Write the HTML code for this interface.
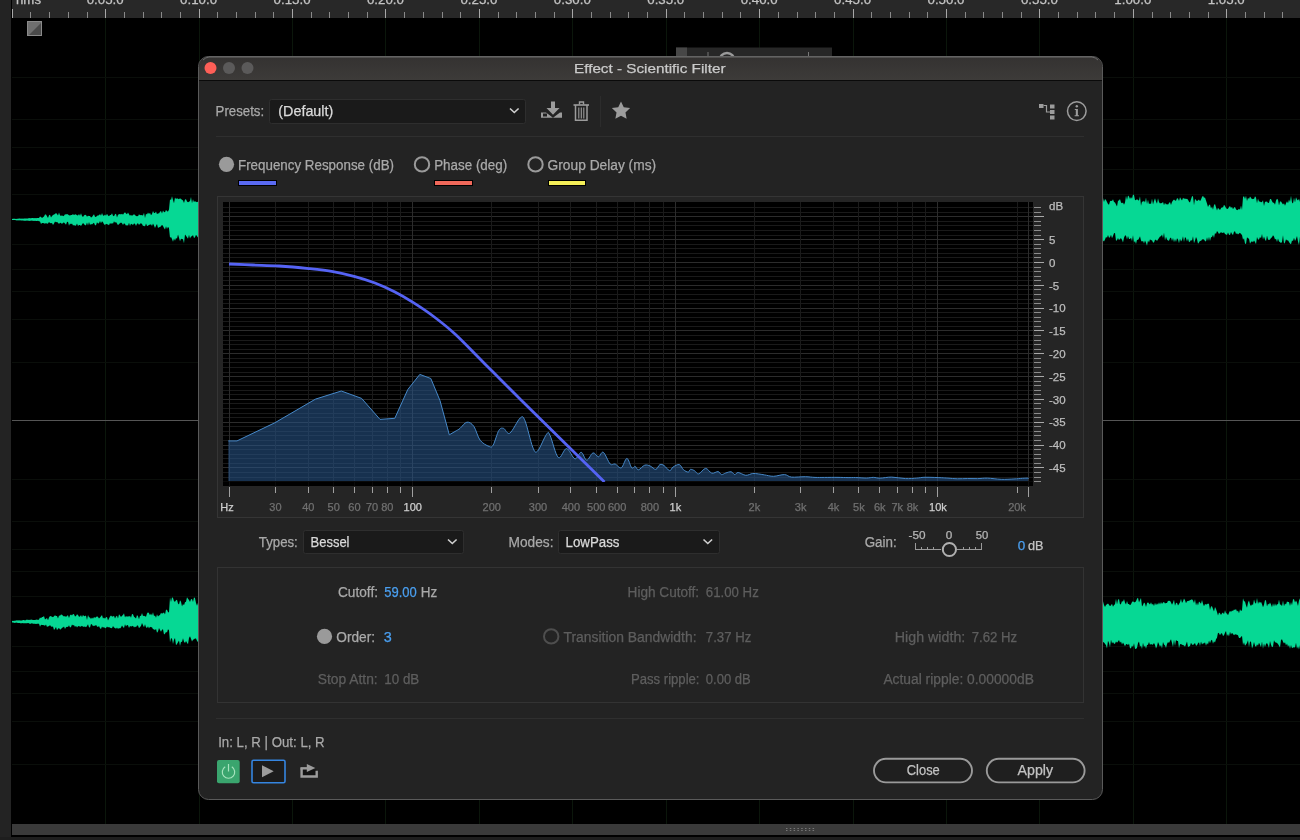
<!DOCTYPE html>
<html><head><meta charset="utf-8"><title>Effect - Scientific Filter</title>
<style>html,body{margin:0;padding:0;background:#000;overflow:hidden}svg{display:block;font-family:"Liberation Sans",sans-serif;will-change:transform}</style>
</head><body>
<svg width="1300" height="840" viewBox="0 0 1300 840">
<rect x="0" y="0" width="1300" height="840" fill="#000" />
<rect x="0" y="0" width="11" height="840" fill="#232323" />
<rect x="12" y="0" width="1288" height="18" fill="#282828" />
<line x1="12.5" y1="9" x2="12.5" y2="18" stroke="#a8a8a8" stroke-width="1" />
<line x1="30.5" y1="12" x2="30.5" y2="18" stroke="#8a8a8a" stroke-width="1" />
<line x1="49.5" y1="12" x2="49.5" y2="18" stroke="#8a8a8a" stroke-width="1" />
<line x1="68.5" y1="12" x2="68.5" y2="18" stroke="#8a8a8a" stroke-width="1" />
<line x1="87.5" y1="12" x2="87.5" y2="18" stroke="#8a8a8a" stroke-width="1" />
<line x1="105.5" y1="9" x2="105.5" y2="18" stroke="#a8a8a8" stroke-width="1" />
<line x1="124.5" y1="12" x2="124.5" y2="18" stroke="#8a8a8a" stroke-width="1" />
<line x1="143.5" y1="12" x2="143.5" y2="18" stroke="#8a8a8a" stroke-width="1" />
<line x1="161.5" y1="12" x2="161.5" y2="18" stroke="#8a8a8a" stroke-width="1" />
<line x1="180.5" y1="12" x2="180.5" y2="18" stroke="#8a8a8a" stroke-width="1" />
<line x1="199.5" y1="9" x2="199.5" y2="18" stroke="#a8a8a8" stroke-width="1" />
<line x1="217.5" y1="12" x2="217.5" y2="18" stroke="#8a8a8a" stroke-width="1" />
<line x1="236.5" y1="12" x2="236.5" y2="18" stroke="#8a8a8a" stroke-width="1" />
<line x1="255.5" y1="12" x2="255.5" y2="18" stroke="#8a8a8a" stroke-width="1" />
<line x1="273.5" y1="12" x2="273.5" y2="18" stroke="#8a8a8a" stroke-width="1" />
<line x1="292.5" y1="9" x2="292.5" y2="18" stroke="#a8a8a8" stroke-width="1" />
<line x1="311.5" y1="12" x2="311.5" y2="18" stroke="#8a8a8a" stroke-width="1" />
<line x1="329.5" y1="12" x2="329.5" y2="18" stroke="#8a8a8a" stroke-width="1" />
<line x1="348.5" y1="12" x2="348.5" y2="18" stroke="#8a8a8a" stroke-width="1" />
<line x1="367.5" y1="12" x2="367.5" y2="18" stroke="#8a8a8a" stroke-width="1" />
<line x1="385.5" y1="9" x2="385.5" y2="18" stroke="#a8a8a8" stroke-width="1" />
<line x1="404.5" y1="12" x2="404.5" y2="18" stroke="#8a8a8a" stroke-width="1" />
<line x1="423.5" y1="12" x2="423.5" y2="18" stroke="#8a8a8a" stroke-width="1" />
<line x1="442.5" y1="12" x2="442.5" y2="18" stroke="#8a8a8a" stroke-width="1" />
<line x1="460.5" y1="12" x2="460.5" y2="18" stroke="#8a8a8a" stroke-width="1" />
<line x1="479.5" y1="9" x2="479.5" y2="18" stroke="#a8a8a8" stroke-width="1" />
<line x1="498.5" y1="12" x2="498.5" y2="18" stroke="#8a8a8a" stroke-width="1" />
<line x1="516.5" y1="12" x2="516.5" y2="18" stroke="#8a8a8a" stroke-width="1" />
<line x1="535.5" y1="12" x2="535.5" y2="18" stroke="#8a8a8a" stroke-width="1" />
<line x1="554.5" y1="12" x2="554.5" y2="18" stroke="#8a8a8a" stroke-width="1" />
<line x1="572.5" y1="9" x2="572.5" y2="18" stroke="#a8a8a8" stroke-width="1" />
<line x1="591.5" y1="12" x2="591.5" y2="18" stroke="#8a8a8a" stroke-width="1" />
<line x1="610.5" y1="12" x2="610.5" y2="18" stroke="#8a8a8a" stroke-width="1" />
<line x1="628.5" y1="12" x2="628.5" y2="18" stroke="#8a8a8a" stroke-width="1" />
<line x1="647.5" y1="12" x2="647.5" y2="18" stroke="#8a8a8a" stroke-width="1" />
<line x1="666.5" y1="9" x2="666.5" y2="18" stroke="#a8a8a8" stroke-width="1" />
<line x1="684.5" y1="12" x2="684.5" y2="18" stroke="#8a8a8a" stroke-width="1" />
<line x1="703.5" y1="12" x2="703.5" y2="18" stroke="#8a8a8a" stroke-width="1" />
<line x1="722.5" y1="12" x2="722.5" y2="18" stroke="#8a8a8a" stroke-width="1" />
<line x1="740.5" y1="12" x2="740.5" y2="18" stroke="#8a8a8a" stroke-width="1" />
<line x1="759.5" y1="9" x2="759.5" y2="18" stroke="#a8a8a8" stroke-width="1" />
<line x1="778.5" y1="12" x2="778.5" y2="18" stroke="#8a8a8a" stroke-width="1" />
<line x1="797.5" y1="12" x2="797.5" y2="18" stroke="#8a8a8a" stroke-width="1" />
<line x1="815.5" y1="12" x2="815.5" y2="18" stroke="#8a8a8a" stroke-width="1" />
<line x1="834.5" y1="12" x2="834.5" y2="18" stroke="#8a8a8a" stroke-width="1" />
<line x1="853.5" y1="9" x2="853.5" y2="18" stroke="#a8a8a8" stroke-width="1" />
<line x1="871.5" y1="12" x2="871.5" y2="18" stroke="#8a8a8a" stroke-width="1" />
<line x1="890.5" y1="12" x2="890.5" y2="18" stroke="#8a8a8a" stroke-width="1" />
<line x1="909.5" y1="12" x2="909.5" y2="18" stroke="#8a8a8a" stroke-width="1" />
<line x1="927.5" y1="12" x2="927.5" y2="18" stroke="#8a8a8a" stroke-width="1" />
<line x1="946.5" y1="9" x2="946.5" y2="18" stroke="#a8a8a8" stroke-width="1" />
<line x1="965.5" y1="12" x2="965.5" y2="18" stroke="#8a8a8a" stroke-width="1" />
<line x1="983.5" y1="12" x2="983.5" y2="18" stroke="#8a8a8a" stroke-width="1" />
<line x1="1002.5" y1="12" x2="1002.5" y2="18" stroke="#8a8a8a" stroke-width="1" />
<line x1="1021.5" y1="12" x2="1021.5" y2="18" stroke="#8a8a8a" stroke-width="1" />
<line x1="1039.5" y1="9" x2="1039.5" y2="18" stroke="#a8a8a8" stroke-width="1" />
<line x1="1058.5" y1="12" x2="1058.5" y2="18" stroke="#8a8a8a" stroke-width="1" />
<line x1="1077.5" y1="12" x2="1077.5" y2="18" stroke="#8a8a8a" stroke-width="1" />
<line x1="1095.5" y1="12" x2="1095.5" y2="18" stroke="#8a8a8a" stroke-width="1" />
<line x1="1114.5" y1="12" x2="1114.5" y2="18" stroke="#8a8a8a" stroke-width="1" />
<line x1="1133.5" y1="9" x2="1133.5" y2="18" stroke="#a8a8a8" stroke-width="1" />
<line x1="1152.5" y1="12" x2="1152.5" y2="18" stroke="#8a8a8a" stroke-width="1" />
<line x1="1170.5" y1="12" x2="1170.5" y2="18" stroke="#8a8a8a" stroke-width="1" />
<line x1="1189.5" y1="12" x2="1189.5" y2="18" stroke="#8a8a8a" stroke-width="1" />
<line x1="1208.5" y1="12" x2="1208.5" y2="18" stroke="#8a8a8a" stroke-width="1" />
<line x1="1226.5" y1="9" x2="1226.5" y2="18" stroke="#a8a8a8" stroke-width="1" />
<line x1="1245.5" y1="12" x2="1245.5" y2="18" stroke="#8a8a8a" stroke-width="1" />
<line x1="1264.5" y1="12" x2="1264.5" y2="18" stroke="#8a8a8a" stroke-width="1" />
<line x1="1282.5" y1="12" x2="1282.5" y2="18" stroke="#8a8a8a" stroke-width="1" />
<text x="16.00" y="4.00" font-size="12" fill="#c4c4c4" stroke="#c4c4c4" stroke-width="0.25" textLength="25.00" lengthAdjust="spacingAndGlyphs">hms</text>
<text x="105.22" y="3.80" font-size="12" fill="#c4c4c4" stroke="#c4c4c4" stroke-width="0.25" textLength="37.00" lengthAdjust="spacingAndGlyphs" text-anchor="middle">0:05.0</text>
<text x="198.64" y="3.80" font-size="12" fill="#c4c4c4" stroke="#c4c4c4" stroke-width="0.25" textLength="37.00" lengthAdjust="spacingAndGlyphs" text-anchor="middle">0:10.0</text>
<text x="292.06" y="3.80" font-size="12" fill="#c4c4c4" stroke="#c4c4c4" stroke-width="0.25" textLength="37.00" lengthAdjust="spacingAndGlyphs" text-anchor="middle">0:15.0</text>
<text x="385.48" y="3.80" font-size="12" fill="#c4c4c4" stroke="#c4c4c4" stroke-width="0.25" textLength="37.00" lengthAdjust="spacingAndGlyphs" text-anchor="middle">0:20.0</text>
<text x="478.90" y="3.80" font-size="12" fill="#c4c4c4" stroke="#c4c4c4" stroke-width="0.25" textLength="37.00" lengthAdjust="spacingAndGlyphs" text-anchor="middle">0:25.0</text>
<text x="572.32" y="3.80" font-size="12" fill="#c4c4c4" stroke="#c4c4c4" stroke-width="0.25" textLength="37.00" lengthAdjust="spacingAndGlyphs" text-anchor="middle">0:30.0</text>
<text x="665.74" y="3.80" font-size="12" fill="#c4c4c4" stroke="#c4c4c4" stroke-width="0.25" textLength="37.00" lengthAdjust="spacingAndGlyphs" text-anchor="middle">0:35.0</text>
<text x="759.16" y="3.80" font-size="12" fill="#c4c4c4" stroke="#c4c4c4" stroke-width="0.25" textLength="37.00" lengthAdjust="spacingAndGlyphs" text-anchor="middle">0:40.0</text>
<text x="852.58" y="3.80" font-size="12" fill="#c4c4c4" stroke="#c4c4c4" stroke-width="0.25" textLength="37.00" lengthAdjust="spacingAndGlyphs" text-anchor="middle">0:45.0</text>
<text x="946.00" y="3.80" font-size="12" fill="#c4c4c4" stroke="#c4c4c4" stroke-width="0.25" textLength="37.00" lengthAdjust="spacingAndGlyphs" text-anchor="middle">0:50.0</text>
<text x="1039.42" y="3.80" font-size="12" fill="#c4c4c4" stroke="#c4c4c4" stroke-width="0.25" textLength="37.00" lengthAdjust="spacingAndGlyphs" text-anchor="middle">0:55.0</text>
<text x="1132.84" y="3.80" font-size="12" fill="#c4c4c4" stroke="#c4c4c4" stroke-width="0.25" textLength="37.00" lengthAdjust="spacingAndGlyphs" text-anchor="middle">1:00.0</text>
<text x="1226.26" y="3.80" font-size="12" fill="#c4c4c4" stroke="#c4c4c4" stroke-width="0.25" textLength="37.00" lengthAdjust="spacingAndGlyphs" text-anchor="middle">1:05.0</text>
<g shape-rendering="crispEdges">
<line x1="105.5" y1="18" x2="105.5" y2="824" stroke="#0b160b" stroke-width="1" />
<line x1="199.5" y1="18" x2="199.5" y2="824" stroke="#0b160b" stroke-width="1" />
<line x1="292.5" y1="18" x2="292.5" y2="824" stroke="#0b160b" stroke-width="1" />
<line x1="385.5" y1="18" x2="385.5" y2="824" stroke="#0b160b" stroke-width="1" />
<line x1="479.5" y1="18" x2="479.5" y2="824" stroke="#0b160b" stroke-width="1" />
<line x1="572.5" y1="18" x2="572.5" y2="824" stroke="#0b160b" stroke-width="1" />
<line x1="666.5" y1="18" x2="666.5" y2="824" stroke="#0b160b" stroke-width="1" />
<line x1="759.5" y1="18" x2="759.5" y2="824" stroke="#0b160b" stroke-width="1" />
<line x1="853.5" y1="18" x2="853.5" y2="824" stroke="#0b160b" stroke-width="1" />
<line x1="946.5" y1="18" x2="946.5" y2="824" stroke="#0b160b" stroke-width="1" />
<line x1="1039.5" y1="18" x2="1039.5" y2="824" stroke="#0b160b" stroke-width="1" />
<line x1="1133.5" y1="18" x2="1133.5" y2="824" stroke="#0b160b" stroke-width="1" />
<line x1="1226.5" y1="18" x2="1226.5" y2="824" stroke="#0b160b" stroke-width="1" />
<line x1="12" y1="194.5" x2="1300" y2="194.5" stroke="#0a0e0a" stroke-width="1" />
<line x1="12" y1="244.5" x2="1300" y2="244.5" stroke="#0a0e0a" stroke-width="1" />
<line x1="12" y1="169.5" x2="1300" y2="169.5" stroke="#0a0e0a" stroke-width="1" />
<line x1="12" y1="269.5" x2="1300" y2="269.5" stroke="#0a0e0a" stroke-width="1" />
<line x1="12" y1="147.5" x2="1300" y2="147.5" stroke="#0a0e0a" stroke-width="1" />
<line x1="12" y1="291.5" x2="1300" y2="291.5" stroke="#0a0e0a" stroke-width="1" />
<line x1="12" y1="119.5" x2="1300" y2="119.5" stroke="#0a0e0a" stroke-width="1" />
<line x1="12" y1="319.5" x2="1300" y2="319.5" stroke="#0a0e0a" stroke-width="1" />
<line x1="12" y1="77.5" x2="1300" y2="77.5" stroke="#0a0e0a" stroke-width="1" />
<line x1="12" y1="362.5" x2="1300" y2="362.5" stroke="#0a0e0a" stroke-width="1" />
<line x1="12" y1="596.5" x2="1300" y2="596.5" stroke="#0a0e0a" stroke-width="1" />
<line x1="12" y1="646.5" x2="1300" y2="646.5" stroke="#0a0e0a" stroke-width="1" />
<line x1="12" y1="571.5" x2="1300" y2="571.5" stroke="#0a0e0a" stroke-width="1" />
<line x1="12" y1="671.5" x2="1300" y2="671.5" stroke="#0a0e0a" stroke-width="1" />
<line x1="12" y1="549.5" x2="1300" y2="549.5" stroke="#0a0e0a" stroke-width="1" />
<line x1="12" y1="693.5" x2="1300" y2="693.5" stroke="#0a0e0a" stroke-width="1" />
<line x1="12" y1="521.5" x2="1300" y2="521.5" stroke="#0a0e0a" stroke-width="1" />
<line x1="12" y1="721.5" x2="1300" y2="721.5" stroke="#0a0e0a" stroke-width="1" />
<line x1="12" y1="479.5" x2="1300" y2="479.5" stroke="#0a0e0a" stroke-width="1" />
<line x1="12" y1="764.5" x2="1300" y2="764.5" stroke="#0a0e0a" stroke-width="1" />
<line x1="12" y1="420.5" x2="1300" y2="420.5" stroke="#555555" stroke-width="1" />
</g>
<path d="M12,219.0 L13,218.8 L14,218.8 L15,218.8 L16,219.0 L17,218.7 L18,218.8 L19,218.6 L20,218.6 L21,218.7 L22,218.6 L23,218.8 L24,218.6 L25,218.5 L26,218.5 L27,218.4 L28,218.5 L29,218.1 L30,218.2 L31,218.3 L32,218.1 L33,218.1 L34,218.2 L35,217.9 L36,218.3 L37,218.0 L38,218.0 L39,217.9 L40,216.5 L41,216.9 L42,218.0 L43,217.2 L44,216.4 L45,214.4 L46,214.4 L47,216.3 L48,218.0 L49,215.2 L50,214.7 L51,217.5 L52,215.9 L53,214.9 L54,214.4 L55,214.0 L56,213.0 L57,213.9 L58,215.4 L59,212.4 L60,215.2 L61,215.9 L62,215.3 L63,216.3 L64,215.8 L65,214.2 L66,214.5 L67,213.9 L68,214.6 L69,215.3 L70,215.4 L71,215.0 L72,215.1 L73,213.9 L74,215.2 L75,214.2 L76,214.5 L77,215.2 L78,215.5 L79,213.9 L80,215.7 L81,213.3 L82,216.1 L83,217.1 L84,215.4 L85,214.7 L86,215.0 L87,216.7 L88,215.7 L89,215.9 L90,216.1 L91,217.5 L92,217.0 L93,215.4 L94,214.2 L95,216.8 L96,216.9 L97,215.8 L98,215.6 L99,215.2 L100,214.1 L101,215.8 L102,213.1 L103,215.4 L104,215.7 L105,214.5 L106,215.7 L107,213.8 L108,215.5 L109,216.2 L110,215.0 L111,214.9 L112,213.3 L113,215.7 L114,216.2 L115,214.2 L116,213.8 L117,217.4 L118,214.7 L119,214.2 L120,214.0 L121,214.4 L122,213.8 L123,214.8 L124,213.3 L125,212.3 L126,213.4 L127,214.2 L128,212.6 L129,214.2 L130,215.7 L131,214.8 L132,215.9 L133,214.7 L134,214.5 L135,214.7 L136,216.2 L137,215.9 L138,216.3 L139,214.3 L140,215.3 L141,214.9 L142,215.2 L143,215.5 L144,212.7 L145,217.9 L146,213.7 L147,214.5 L148,212.5 L149,213.9 L150,212.7 L151,215.2 L152,213.9 L153,210.9 L154,212.9 L155,213.1 L156,211.6 L157,214.2 L158,213.3 L159,213.4 L160,211.7 L161,210.9 L162,213.5 L163,210.5 L164,212.0 L165,212.3 L166,209.7 L167,211.2 L168,211.6 L169,209.5 L170,199.2 L171,199.9 L172,196.2 L173,199.9 L174,203.3 L175,197.6 L176,199.0 L177,198.2 L178,198.7 L179,199.2 L180,198.2 L181,198.9 L182,199.8 L183,200.5 L184,203.0 L185,199.5 L186,199.2 L187,201.6 L188,202.2 L189,201.7 L190,200.9 L191,196.9 L192,203.3 L193,199.2 L194,202.3 L195,200.8 L196,202.3 L197,201.8 L198,202.0 L198,237.6 L197,236.3 L196,234.8 L195,237.2 L194,238.0 L193,234.9 L192,236.2 L191,236.4 L190,238.4 L189,234.7 L188,238.7 L187,237.2 L186,235.7 L185,234.5 L184,243.3 L183,239.2 L182,238.9 L181,238.8 L180,241.3 L179,237.8 L178,234.6 L177,238.8 L176,238.1 L175,240.8 L174,238.5 L173,241.7 L172,239.0 L171,237.0 L170,237.8 L169,228.3 L168,226.7 L167,229.0 L166,226.3 L165,229.6 L164,228.0 L163,226.1 L162,224.8 L161,226.3 L160,227.0 L159,227.3 L158,228.1 L157,224.1 L156,225.8 L155,227.9 L154,225.6 L153,223.5 L152,225.9 L151,224.2 L150,224.8 L149,224.8 L148,225.8 L147,226.0 L146,223.4 L145,226.5 L144,225.7 L143,226.0 L142,224.1 L141,223.3 L140,223.7 L139,225.1 L138,223.3 L137,223.8 L136,226.0 L135,223.7 L134,223.5 L133,224.9 L132,224.3 L131,223.7 L130,226.1 L129,222.8 L128,225.8 L127,224.9 L126,225.7 L125,223.9 L124,223.3 L123,225.0 L122,223.2 L121,222.4 L120,223.3 L119,223.9 L118,225.2 L117,223.6 L116,222.1 L115,222.7 L114,221.2 L113,223.7 L112,222.9 L111,224.0 L110,223.0 L109,225.2 L108,224.5 L107,224.3 L106,223.7 L105,225.0 L104,224.2 L103,222.2 L102,221.3 L101,223.2 L100,221.0 L99,223.2 L98,223.5 L97,222.2 L96,225.2 L95,225.2 L94,222.7 L93,223.5 L92,224.6 L91,224.1 L90,224.9 L89,222.1 L88,225.5 L87,222.4 L86,225.2 L85,225.3 L84,224.1 L83,223.0 L82,224.4 L81,226.1 L80,225.0 L79,224.9 L78,225.9 L77,223.6 L76,225.5 L75,225.8 L74,225.0 L73,225.5 L72,223.5 L71,224.2 L70,223.6 L69,225.8 L68,221.8 L67,222.0 L66,224.7 L65,223.4 L64,222.4 L63,222.8 L62,223.9 L61,223.1 L60,222.8 L59,223.9 L58,222.8 L57,222.0 L56,222.2 L55,221.4 L54,223.4 L53,224.9 L52,222.9 L51,223.3 L50,222.9 L49,222.1 L48,223.4 L47,223.8 L46,223.1 L45,223.7 L44,223.2 L43,223.0 L42,223.0 L41,224.0 L40,221.6 L39,221.2 L38,220.8 L37,221.0 L36,220.9 L35,220.7 L34,221.1 L33,220.7 L32,220.8 L31,220.6 L30,220.9 L29,220.8 L28,220.7 L27,220.6 L26,220.7 L25,220.8 L24,220.7 L23,220.6 L22,220.5 L21,220.6 L20,220.3 L19,220.4 L18,220.3 L17,220.5 L16,220.2 L15,220.1 L14,219.9 L13,220.0 L12,219.9Z" fill="#06d894"/>
<path d="M12,620.8 L13,620.9 L14,620.7 L15,620.7 L16,620.6 L17,620.2 L18,620.6 L19,620.3 L20,620.5 L21,620.6 L22,620.5 L23,620.1 L24,620.1 L25,620.5 L26,620.0 L27,619.6 L28,619.9 L29,619.8 L30,620.1 L31,619.6 L32,619.7 L33,619.9 L34,620.1 L35,620.0 L36,619.8 L37,619.4 L38,619.9 L39,619.5 L40,617.6 L41,618.2 L42,617.1 L43,617.0 L44,616.0 L45,619.4 L46,618.7 L47,617.9 L48,620.2 L49,617.6 L50,616.1 L51,616.2 L52,616.8 L53,617.2 L54,616.2 L55,615.3 L56,615.9 L57,615.9 L58,618.4 L59,615.4 L60,615.8 L61,614.4 L62,614.7 L63,615.8 L64,616.5 L65,616.0 L66,617.0 L67,615.8 L68,615.3 L69,617.9 L70,615.2 L71,614.6 L72,615.6 L73,613.9 L74,614.2 L75,616.4 L76,616.1 L77,614.3 L78,615.1 L79,616.8 L80,616.5 L81,615.0 L82,617.3 L83,614.8 L84,616.3 L85,616.1 L86,615.5 L87,620.0 L88,614.9 L89,617.2 L90,617.4 L91,619.1 L92,617.6 L93,618.7 L94,616.9 L95,617.7 L96,617.2 L97,616.3 L98,616.9 L99,618.4 L100,617.6 L101,616.3 L102,615.0 L103,618.5 L104,617.6 L105,618.7 L106,617.2 L107,617.1 L108,620.4 L109,618.4 L110,616.4 L111,615.6 L112,616.6 L113,616.4 L114,615.8 L115,618.4 L116,616.4 L117,615.7 L118,618.5 L119,614.3 L120,615.4 L121,617.0 L122,615.7 L123,615.1 L124,613.3 L125,617.6 L126,615.7 L127,616.9 L128,616.0 L129,616.8 L130,615.8 L131,617.7 L132,614.1 L133,614.2 L134,616.8 L135,617.6 L136,618.4 L137,615.1 L138,616.3 L139,619.3 L140,615.7 L141,615.9 L142,612.9 L143,616.0 L144,615.7 L145,616.3 L146,616.8 L147,613.4 L148,612.3 L149,613.3 L150,615.2 L151,613.6 L152,615.5 L153,612.3 L154,615.9 L155,615.5 L156,617.8 L157,614.2 L158,616.5 L159,615.6 L160,614.9 L161,612.7 L162,613.7 L163,613.1 L164,612.5 L165,614.4 L166,609.8 L167,609.8 L168,612.0 L169,612.6 L170,597.2 L171,601.9 L172,597.3 L173,597.9 L174,601.3 L175,601.7 L176,600.2 L177,599.7 L178,603.6 L179,604.5 L180,600.3 L181,601.8 L182,606.5 L183,604.0 L184,605.2 L185,602.3 L186,601.7 L187,597.3 L188,598.8 L189,599.9 L190,602.1 L191,599.3 L192,598.9 L193,602.1 L194,597.3 L195,598.3 L196,603.1 L197,605.7 L198,602.8 L198,642.3 L197,640.7 L196,638.4 L195,638.6 L194,639.3 L193,639.8 L192,641.6 L191,638.8 L190,636.3 L189,638.0 L188,644.2 L187,642.8 L186,641.1 L185,642.9 L184,641.8 L183,638.2 L182,642.0 L181,641.7 L180,645.9 L179,640.4 L178,642.2 L177,643.9 L176,645.3 L175,638.1 L174,639.7 L173,643.9 L172,638.5 L171,638.2 L170,642.2 L169,630.2 L168,629.3 L167,632.6 L166,632.1 L165,633.8 L164,634.6 L163,629.2 L162,629.8 L161,631.7 L160,630.1 L159,628.1 L158,631.5 L157,632.7 L156,628.7 L155,630.3 L154,629.3 L153,629.2 L152,627.3 L151,627.3 L150,626.7 L149,628.6 L148,626.3 L147,628.1 L146,627.3 L145,624.2 L144,627.2 L143,625.3 L142,623.0 L141,626.0 L140,626.9 L139,628.3 L138,625.6 L137,625.5 L136,627.3 L135,626.6 L134,627.6 L133,625.7 L132,626.2 L131,626.6 L130,625.9 L129,628.0 L128,625.3 L127,624.9 L126,626.5 L125,624.2 L124,627.9 L123,627.1 L122,625.4 L121,627.6 L120,628.4 L119,627.9 L118,629.1 L117,627.5 L116,628.8 L115,628.1 L114,627.6 L113,625.9 L112,628.3 L111,628.0 L110,627.7 L109,627.1 L108,627.4 L107,626.5 L106,628.1 L105,628.3 L104,627.1 L103,627.7 L102,626.4 L101,629.0 L100,628.2 L99,626.1 L98,627.0 L97,626.4 L96,624.8 L95,626.0 L94,625.6 L93,626.3 L92,624.6 L91,624.0 L90,627.4 L89,627.2 L88,624.2 L87,625.9 L86,627.3 L85,626.5 L84,626.8 L83,626.8 L82,625.8 L81,626.5 L80,626.7 L79,626.1 L78,626.3 L77,627.6 L76,625.8 L75,626.9 L74,625.1 L73,625.4 L72,624.5 L71,626.9 L70,627.4 L69,625.3 L68,627.0 L67,626.8 L66,627.2 L65,628.9 L64,626.5 L63,627.5 L62,627.8 L61,629.2 L60,629.4 L59,628.0 L58,628.8 L57,630.2 L56,627.0 L55,628.7 L54,629.9 L53,626.6 L52,626.8 L51,626.6 L50,625.0 L49,626.3 L48,626.2 L47,627.0 L46,624.6 L45,625.8 L44,625.2 L43,625.1 L42,625.0 L41,624.8 L40,626.7 L39,623.7 L38,623.7 L37,623.7 L36,624.1 L35,623.7 L34,623.7 L33,623.7 L32,623.3 L31,623.6 L30,623.9 L29,623.2 L28,623.0 L27,623.2 L26,623.2 L25,623.3 L24,623.3 L23,623.2 L22,623.1 L21,623.4 L20,623.0 L19,623.0 L18,623.0 L17,622.8 L16,622.4 L15,622.9 L14,622.7 L13,622.6 L12,622.5Z" fill="#06d894"/>
<path d="M1103,198.1 L1104,202.1 L1105,199.1 L1106,200.1 L1107,202.1 L1108,204.1 L1109,204.7 L1110,201.3 L1111,200.7 L1112,201.1 L1113,199.3 L1114,202.0 L1115,202.4 L1116,204.6 L1117,206.5 L1118,200.7 L1119,200.4 L1120,199.0 L1121,202.6 L1122,203.3 L1123,202.6 L1124,204.8 L1125,202.4 L1126,195.7 L1127,200.1 L1128,195.4 L1129,196.4 L1130,199.1 L1131,197.1 L1132,198.7 L1133,194.4 L1134,195.1 L1135,199.9 L1136,200.2 L1137,198.9 L1138,200.3 L1139,200.5 L1140,196.3 L1141,205.8 L1142,201.4 L1143,201.8 L1144,200.7 L1145,202.6 L1146,197.5 L1147,203.9 L1148,199.8 L1149,204.2 L1150,203.3 L1151,204.2 L1152,198.6 L1153,204.4 L1154,200.9 L1155,198.3 L1156,201.4 L1157,203.8 L1158,198.2 L1159,202.1 L1160,203.6 L1161,203.0 L1162,203.3 L1163,201.7 L1164,205.3 L1165,202.7 L1166,204.4 L1167,204.0 L1168,204.7 L1169,203.1 L1170,202.0 L1171,205.1 L1172,202.0 L1173,200.4 L1174,199.6 L1175,200.5 L1176,200.7 L1177,198.3 L1178,198.4 L1179,200.9 L1180,197.2 L1181,198.9 L1182,200.6 L1183,197.7 L1184,198.7 L1185,198.5 L1186,199.1 L1187,198.7 L1188,199.7 L1189,201.7 L1190,202.5 L1191,199.3 L1192,196.3 L1193,196.2 L1194,205.3 L1195,198.7 L1196,200.1 L1197,201.3 L1198,200.2 L1199,199.5 L1200,201.3 L1201,199.4 L1202,196.9 L1203,195.8 L1204,197.8 L1205,197.4 L1206,200.6 L1207,203.4 L1208,206.9 L1209,205.0 L1210,204.4 L1211,208.5 L1212,206.4 L1213,209.8 L1214,205.0 L1215,203.9 L1216,207.3 L1217,210.4 L1218,207.7 L1219,208.9 L1220,210.1 L1221,208.3 L1222,207.3 L1223,207.4 L1224,204.8 L1225,206.0 L1226,208.1 L1227,208.9 L1228,208.8 L1229,207.0 L1230,206.1 L1231,208.0 L1232,206.8 L1233,209.3 L1234,207.5 L1235,207.1 L1236,209.2 L1237,210.2 L1238,209.8 L1239,208.7 L1240,209.7 L1241,205.6 L1242,209.9 L1243,197.3 L1244,195.9 L1245,199.1 L1246,195.7 L1247,201.1 L1248,197.7 L1249,199.0 L1250,196.4 L1251,197.7 L1252,199.2 L1253,198.8 L1254,198.9 L1255,196.3 L1256,197.6 L1257,203.2 L1258,198.6 L1259,201.5 L1260,201.6 L1261,202.3 L1262,202.1 L1263,200.2 L1264,206.0 L1265,201.8 L1266,201.8 L1267,201.6 L1268,203.0 L1269,202.8 L1270,198.9 L1271,198.9 L1272,201.2 L1273,202.7 L1274,202.7 L1275,204.8 L1276,200.6 L1277,198.7 L1278,199.7 L1279,205.6 L1280,201.6 L1281,201.4 L1282,203.1 L1283,204.4 L1284,203.2 L1285,205.8 L1286,203.3 L1287,201.3 L1288,203.2 L1289,199.6 L1290,201.9 L1291,195.7 L1292,202.5 L1293,203.5 L1294,197.7 L1295,202.5 L1296,197.3 L1297,199.4 L1298,200.5 L1299,198.7 L1300,201.9 L1300,236.6 L1299,245.1 L1298,241.6 L1297,236.0 L1296,239.0 L1295,241.1 L1294,237.8 L1293,241.1 L1292,240.5 L1291,244.2 L1290,243.6 L1289,241.9 L1288,240.3 L1287,240.5 L1286,239.2 L1285,242.5 L1284,243.7 L1283,235.2 L1282,241.8 L1281,243.2 L1280,241.9 L1279,241.4 L1278,238.6 L1277,241.9 L1276,238.8 L1275,239.6 L1274,236.6 L1273,235.2 L1272,237.2 L1271,237.9 L1270,239.5 L1269,239.9 L1268,239.6 L1267,235.6 L1266,241.2 L1265,239.6 L1264,236.6 L1263,239.4 L1262,233.9 L1261,238.2 L1260,236.9 L1259,239.4 L1258,239.5 L1257,236.9 L1256,244.2 L1255,242.0 L1254,240.6 L1253,242.3 L1252,241.2 L1251,241.9 L1250,243.7 L1249,238.8 L1248,238.3 L1247,237.3 L1246,244.1 L1245,243.5 L1244,238.3 L1243,239.7 L1242,234.9 L1241,234.1 L1240,232.8 L1239,233.6 L1238,234.4 L1237,233.3 L1236,233.9 L1235,231.2 L1234,231.8 L1233,235.0 L1232,233.9 L1231,231.9 L1230,234.9 L1229,234.8 L1228,232.6 L1227,235.1 L1226,234.4 L1225,234.0 L1224,232.3 L1223,233.1 L1222,232.7 L1221,232.2 L1220,232.9 L1219,233.9 L1218,232.2 L1217,231.1 L1216,234.0 L1215,232.9 L1214,238.1 L1213,234.7 L1212,237.1 L1211,237.2 L1210,240.9 L1209,236.8 L1208,241.1 L1207,237.2 L1206,241.5 L1205,240.9 L1204,239.4 L1203,239.2 L1202,239.6 L1201,241.1 L1200,240.8 L1199,242.6 L1198,243.8 L1197,239.2 L1196,237.1 L1195,240.6 L1194,243.3 L1193,236.2 L1192,240.8 L1191,239.9 L1190,241.5 L1189,242.2 L1188,238.4 L1187,241.5 L1186,238.2 L1185,237.1 L1184,241.9 L1183,236.2 L1182,240.1 L1181,241.6 L1180,238.8 L1179,243.3 L1178,239.4 L1177,238.3 L1176,242.1 L1175,239.1 L1174,242.2 L1173,238.1 L1172,240.9 L1171,237.6 L1170,238.3 L1169,240.7 L1168,240.6 L1167,239.6 L1166,236.8 L1165,240.4 L1164,232.8 L1163,238.0 L1162,234.4 L1161,236.2 L1160,236.6 L1159,238.1 L1158,239.5 L1157,241.0 L1156,239.7 L1155,239.8 L1154,242.5 L1153,242.4 L1152,240.2 L1151,240.3 L1150,239.2 L1149,242.4 L1148,240.4 L1147,245.8 L1146,242.8 L1145,240.6 L1144,243.6 L1143,240.8 L1142,241.8 L1141,240.5 L1140,236.2 L1139,238.4 L1138,239.9 L1137,239.8 L1136,244.0 L1135,240.9 L1134,242.4 L1133,235.2 L1132,241.2 L1131,237.8 L1130,239.0 L1129,238.9 L1128,236.0 L1127,239.4 L1126,235.5 L1125,235.6 L1124,237.8 L1123,242.6 L1122,239.8 L1121,238.2 L1120,238.8 L1119,240.3 L1118,238.0 L1117,240.3 L1116,240.8 L1115,233.0 L1114,233.2 L1113,235.9 L1112,238.3 L1111,234.8 L1110,237.3 L1109,237.7 L1108,235.0 L1107,237.8 L1106,236.9 L1105,239.5 L1104,241.6 L1103,240.6Z" fill="#06d894"/>
<path d="M1103,601.3 L1104,605.0 L1105,607.1 L1106,604.9 L1107,604.3 L1108,603.4 L1109,604.8 L1110,606.3 L1111,605.3 L1112,603.8 L1113,606.8 L1114,605.1 L1115,604.3 L1116,598.8 L1117,604.5 L1118,599.8 L1119,598.9 L1120,604.4 L1121,603.9 L1122,600.9 L1123,601.8 L1124,599.0 L1125,602.8 L1126,604.5 L1127,601.1 L1128,604.0 L1129,604.1 L1130,605.2 L1131,604.2 L1132,602.0 L1133,601.2 L1134,602.3 L1135,602.3 L1136,601.2 L1137,598.7 L1138,597.8 L1139,602.4 L1140,599.9 L1141,597.9 L1142,606.5 L1143,605.0 L1144,602.5 L1145,603.6 L1146,607.1 L1147,603.3 L1148,602.2 L1149,603.5 L1150,604.6 L1151,602.2 L1152,604.7 L1153,603.8 L1154,605.9 L1155,602.8 L1156,605.3 L1157,603.2 L1158,604.8 L1159,602.3 L1160,604.5 L1161,602.1 L1162,604.1 L1163,602.6 L1164,602.0 L1165,603.5 L1166,602.9 L1167,602.9 L1168,600.7 L1169,601.1 L1170,600.8 L1171,602.6 L1172,604.7 L1173,602.7 L1174,599.8 L1175,605.7 L1176,602.9 L1177,602.7 L1178,605.6 L1179,604.1 L1180,602.3 L1181,598.8 L1182,602.9 L1183,601.3 L1184,598.6 L1185,600.3 L1186,603.3 L1187,601.3 L1188,601.0 L1189,600.7 L1190,600.2 L1191,599.7 L1192,599.3 L1193,600.5 L1194,603.0 L1195,599.3 L1196,605.5 L1197,602.4 L1198,605.6 L1199,601.6 L1200,602.5 L1201,603.7 L1202,600.0 L1203,603.7 L1204,606.3 L1205,604.0 L1206,604.6 L1207,604.3 L1208,603.4 L1209,604.1 L1210,609.9 L1211,606.6 L1212,606.3 L1213,609.0 L1214,611.5 L1215,606.9 L1216,609.1 L1217,612.1 L1218,615.6 L1219,612.4 L1220,613.3 L1221,615.1 L1222,613.3 L1223,612.6 L1224,614.3 L1225,610.3 L1226,613.3 L1227,613.5 L1228,615.3 L1229,612.7 L1230,610.8 L1231,611.9 L1232,610.6 L1233,611.0 L1234,609.6 L1235,609.9 L1236,608.9 L1237,611.4 L1238,610.6 L1239,613.2 L1240,609.3 L1241,611.0 L1242,610.2 L1243,598.3 L1244,601.2 L1245,601.4 L1246,605.2 L1247,607.8 L1248,602.6 L1249,600.4 L1250,604.6 L1251,605.9 L1252,604.3 L1253,605.0 L1254,599.5 L1255,602.8 L1256,603.7 L1257,598.0 L1258,604.1 L1259,601.6 L1260,602.9 L1261,601.7 L1262,604.2 L1263,607.2 L1264,604.8 L1265,600.1 L1266,600.5 L1267,606.5 L1268,603.7 L1269,604.5 L1270,602.4 L1271,604.5 L1272,607.2 L1273,603.3 L1274,606.4 L1275,603.2 L1276,606.0 L1277,603.9 L1278,604.5 L1279,599.6 L1280,604.7 L1281,604.4 L1282,606.3 L1283,600.4 L1284,606.3 L1285,603.5 L1286,604.4 L1287,601.6 L1288,602.0 L1289,602.1 L1290,606.1 L1291,602.1 L1292,605.3 L1293,599.3 L1294,599.2 L1295,602.4 L1296,600.5 L1297,602.4 L1298,606.0 L1299,600.4 L1300,598.2 L1300,645.1 L1299,649.4 L1298,646.2 L1297,648.8 L1296,642.7 L1295,647.5 L1294,647.2 L1293,647.5 L1292,648.2 L1291,645.1 L1290,648.7 L1289,645.1 L1288,646.7 L1287,643.6 L1286,645.5 L1285,642.2 L1284,643.4 L1283,641.8 L1282,639.3 L1281,640.1 L1280,647.5 L1279,645.8 L1278,643.9 L1277,643.1 L1276,642.5 L1275,642.3 L1274,640.2 L1273,646.4 L1272,647.2 L1271,644.7 L1270,641.0 L1269,647.9 L1268,644.9 L1267,642.9 L1266,643.9 L1265,647.0 L1264,643.6 L1263,648.7 L1262,641.6 L1261,647.2 L1260,644.7 L1259,642.7 L1258,645.7 L1257,644.2 L1256,647.1 L1255,645.8 L1254,642.1 L1253,646.1 L1252,648.6 L1251,641.7 L1250,641.4 L1249,647.2 L1248,640.2 L1247,643.1 L1246,644.4 L1245,645.7 L1244,642.3 L1243,645.1 L1242,635.7 L1241,637.0 L1240,637.9 L1239,637.9 L1238,635.2 L1237,634.8 L1236,634.4 L1235,634.2 L1234,635.3 L1233,633.9 L1232,632.8 L1231,634.4 L1230,631.7 L1229,636.5 L1228,634.1 L1227,636.1 L1226,631.1 L1225,632.8 L1224,635.2 L1223,635.9 L1222,633.2 L1221,633.4 L1220,635.2 L1219,633.3 L1218,632.7 L1217,637.7 L1216,639.3 L1215,642.5 L1214,641.2 L1213,643.7 L1212,639.8 L1211,640.5 L1210,643.3 L1209,640.6 L1208,644.4 L1207,642.9 L1206,645.8 L1205,642.3 L1204,643.5 L1203,643.3 L1202,644.5 L1201,641.5 L1200,646.1 L1199,642.2 L1198,643.3 L1197,645.2 L1196,645.8 L1195,643.1 L1194,644.1 L1193,645.1 L1192,644.4 L1191,642.8 L1190,645.9 L1189,646.6 L1188,646.9 L1187,641.6 L1186,644.3 L1185,646.8 L1184,645.4 L1183,645.0 L1182,644.7 L1181,643.9 L1180,644.3 L1179,648.3 L1178,640.9 L1177,640.9 L1176,640.1 L1175,645.9 L1174,639.8 L1173,647.0 L1172,642.9 L1171,639.2 L1170,641.0 L1169,643.0 L1168,642.0 L1167,644.1 L1166,647.9 L1165,645.5 L1164,644.4 L1163,641.9 L1162,648.5 L1161,644.9 L1160,646.8 L1159,644.2 L1158,642.0 L1157,646.3 L1156,648.4 L1155,644.9 L1154,642.9 L1153,644.5 L1152,644.8 L1151,643.8 L1150,645.1 L1149,642.1 L1148,644.8 L1147,644.9 L1146,648.8 L1145,645.6 L1144,646.9 L1143,642.8 L1142,648.9 L1141,645.4 L1140,646.7 L1139,641.6 L1138,643.3 L1137,647.7 L1136,649.1 L1135,648.7 L1134,643.3 L1133,646.9 L1132,645.4 L1131,648.3 L1130,648.2 L1129,643.5 L1128,645.3 L1127,644.1 L1126,644.2 L1125,646.3 L1124,644.2 L1123,642.4 L1122,644.6 L1121,641.5 L1120,642.8 L1119,640.0 L1118,641.5 L1117,642.7 L1116,641.6 L1115,643.8 L1114,643.7 L1113,641.9 L1112,643.4 L1111,639.7 L1110,647.3 L1109,642.9 L1108,640.7 L1107,648.5 L1106,645.2 L1105,643.8 L1104,642.5 L1103,642.0Z" fill="#06d894"/>
<rect x="12" y="824" width="1288" height="11" fill="#3a3a3a" />
<rect x="12" y="835" width="1288" height="2" fill="#000" />
<rect x="0" y="837" width="1300" height="3" fill="#1e1e1e" />
<rect x="786.0" y="828" width="1.5" height="1" fill="#777" />
<rect x="786.0" y="830" width="1.5" height="1" fill="#777" />
<rect x="789.8" y="828" width="1.5" height="1" fill="#777" />
<rect x="789.8" y="830" width="1.5" height="1" fill="#777" />
<rect x="793.6" y="828" width="1.5" height="1" fill="#777" />
<rect x="793.6" y="830" width="1.5" height="1" fill="#777" />
<rect x="797.4" y="828" width="1.5" height="1" fill="#777" />
<rect x="797.4" y="830" width="1.5" height="1" fill="#777" />
<rect x="801.2" y="828" width="1.5" height="1" fill="#777" />
<rect x="801.2" y="830" width="1.5" height="1" fill="#777" />
<rect x="805.0" y="828" width="1.5" height="1" fill="#777" />
<rect x="805.0" y="830" width="1.5" height="1" fill="#777" />
<rect x="808.8" y="828" width="1.5" height="1" fill="#777" />
<rect x="808.8" y="830" width="1.5" height="1" fill="#777" />
<rect x="812.6" y="828" width="1.5" height="1" fill="#777" />
<rect x="812.6" y="830" width="1.5" height="1" fill="#777" />
<rect x="27.5" y="21.5" width="14" height="14" fill="#6f6f6f" stroke="#8a8a8a" stroke-width="1"/>
<path d="M29,35 L41,23 L41,35 Z" fill="#4a4a4a"/>
<rect x="676" y="47.5" width="156" height="10" fill="#272727" />
<rect x="676" y="47.5" width="11" height="10" fill="#474747" />
<circle cx="727" cy="60.5" r="7.5" fill="none" stroke="#9a9a9a" stroke-width="2.4"/>
<line x1="708" y1="52" x2="708" y2="57" stroke="#777" stroke-width="1" />
<line x1="808.5" y1="52" x2="808.5" y2="57" stroke="#777" stroke-width="1" />
<path d="M208.5,56.5 H1092.5 A10,10 0 0 1 1102.5,66.5 V789.5 A10,10 0 0 1 1092.5,799.5 H208.5 A10,10 0 0 1 198.5,789.5 V66.5 A10,10 0 0 1 208.5,56.5 Z" fill="#232323" stroke="#5a5a5a" stroke-width="1"/>
<linearGradient id="tb" x1="0" y1="0" x2="0" y2="1"><stop offset="0" stop-color="#343231"/><stop offset="1" stop-color="#3d3b39"/></linearGradient>
<path d="M209,57 H1092 A9.5,9.5 0 0 1 1102,66.5 V80 H199 V66.5 A9.5,9.5 0 0 1 209,57 Z" fill="url(#tb)"/>
<path d="M203,60 A10,10 0 0 1 209,57 H1092 A10,10 0 0 1 1098,60" fill="none" stroke="#6c6c6c" stroke-width="1"/>
<rect x="199" y="80" width="903" height="1" fill="#0a0a0a" />
<circle cx="210.5" cy="68" r="6" fill="#fe5f57"/>
<circle cx="229" cy="68" r="6" fill="#5b5a5a"/>
<circle cx="247.5" cy="68" r="6" fill="#5b5a5a"/>
<text x="574.00" y="73.00" font-size="13" fill="#cacaca" stroke="#cacaca" stroke-width="0.25" textLength="151.50" lengthAdjust="spacingAndGlyphs">Effect - Scientific Filter</text>
<text x="215.60" y="116.00" font-size="14" fill="#a9a9a9" stroke="#a9a9a9" stroke-width="0.25" textLength="48.50" lengthAdjust="spacingAndGlyphs">Presets:</text>
<rect x="269.5" y="99.5" width="256" height="24" fill="#1a1a1a" stroke="#2e2e2e" stroke-width="1" rx="2"/>
<text x="278.30" y="116.00" font-size="14" fill="#dadada" stroke="#dadada" stroke-width="0.25" textLength="55.00" lengthAdjust="spacingAndGlyphs">(Default)</text>
<polyline points="510,108.5 514.3,112.5 518.6,108.5" fill="none" stroke="#d0d0d0" stroke-width="1.6"/>
<path d="M551,101.5 H555 V108 H559.5 L553,114.8 L546.5,108 H551 Z" fill="#9c9c9c"/>
<path d="M541,112.5 H546 L553,117.7 L560,112.5 H562 V117.7 H541 Z" fill="#9c9c9c"/>
<rect x="543" y="113.5" width="4" height="3" fill="#232323" />
<path d="M573.5,105 H589" stroke="#9c9c9c" stroke-width="1.6" fill="none"/>
<path d="M579.5,104.5 V102 H583.5 V104.5" stroke="#9c9c9c" stroke-width="1.4" fill="none"/>
<path d="M575.5,105 V120.3 H587 V105" stroke="#9c9c9c" stroke-width="1.5" fill="none"/>
<line x1="578.8" y1="107.5" x2="578.8" y2="118.5" stroke="#9c9c9c" stroke-width="1.1" />
<line x1="581.3" y1="107.5" x2="581.3" y2="118.5" stroke="#9c9c9c" stroke-width="1.1" />
<line x1="583.8" y1="107.5" x2="583.8" y2="118.5" stroke="#9c9c9c" stroke-width="1.1" />
<line x1="600.5" y1="96" x2="600.5" y2="127" stroke="#2c2c2c" stroke-width="1" />
<polygon points="621.00,101.40 623.76,107.20 630.13,108.03 625.47,112.45 626.64,118.77 621.00,115.70 615.36,118.77 616.53,112.45 611.87,108.03 618.24,107.20" fill="#9c9c9c"/>
<rect x="1039" y="104" width="4.5" height="4" fill="#9c9c9c" />
<path d="M1043.5,105.5 H1046.5 V112 H1050" stroke="#9c9c9c" stroke-width="1.2" fill="none"/>
<rect x="1050" y="104.5" width="4.5" height="4" fill="#9c9c9c" />
<rect x="1050" y="110" width="4.5" height="4" fill="#9c9c9c" />
<rect x="1050" y="115.5" width="4.5" height="4" fill="#9c9c9c" />
<circle cx="1076.8" cy="111.1" r="9.3" fill="none" stroke="#9c9c9c" stroke-width="1.5"/>
<circle cx="1076.8" cy="106.3" r="1.2" fill="#9c9c9c"/>
<path d="M1074.8,109 H1077.9 V115.2 H1079 V116.3 H1074.6 V115.2 H1075.8 V110.1 H1074.8 Z" fill="#9c9c9c"/>
<line x1="216" y1="136.5" x2="1084" y2="136.5" stroke="#2f2f2f" stroke-width="1" />
<circle cx="226.5" cy="164.3" r="7.6" fill="#9a9a9a"/>
<text x="238.00" y="170.00" font-size="14" fill="#a9a9a9" stroke="#a9a9a9" stroke-width="0.25" textLength="156.00" lengthAdjust="spacingAndGlyphs">Frequency Response (dB)</text>
<rect x="238.5" y="180.5" width="38" height="5" fill="#5a6af2" stroke="#000" stroke-width="1"/>
<circle cx="422" cy="164.4" r="7.2" fill="none" stroke="#9a9a9a" stroke-width="2"/>
<text x="434.20" y="170.00" font-size="14" fill="#a9a9a9" stroke="#a9a9a9" stroke-width="0.25" textLength="73.00" lengthAdjust="spacingAndGlyphs">Phase (deg)</text>
<rect x="434.5" y="180.5" width="38" height="5" fill="#f0685a" stroke="#000" stroke-width="1"/>
<circle cx="535.5" cy="164.4" r="7.2" fill="none" stroke="#9a9a9a" stroke-width="2"/>
<text x="547.60" y="170.00" font-size="14" fill="#a9a9a9" stroke="#a9a9a9" stroke-width="0.25" textLength="108.50" lengthAdjust="spacingAndGlyphs">Group Delay (ms)</text>
<rect x="548.5" y="180.5" width="37" height="5" fill="#f4ee58" stroke="#000" stroke-width="1"/>
<rect x="217.5" y="196.5" width="866" height="321" fill="#252525" stroke="#353535" stroke-width="1"/>
<rect x="223" y="202" width="810" height="284" fill="#000" />
<g shape-rendering="crispEdges">
<line x1="223" y1="207.5" x2="1033" y2="207.5" stroke="#1a1a1a" stroke-width="1" />
<line x1="223" y1="212.5" x2="1033" y2="212.5" stroke="#1a1a1a" stroke-width="1" />
<line x1="223" y1="216.5" x2="1033" y2="216.5" stroke="#2c2c2c" stroke-width="1" />
<line x1="223" y1="221.5" x2="1033" y2="221.5" stroke="#1a1a1a" stroke-width="1" />
<line x1="223" y1="225.5" x2="1033" y2="225.5" stroke="#1a1a1a" stroke-width="1" />
<line x1="223" y1="230.5" x2="1033" y2="230.5" stroke="#1a1a1a" stroke-width="1" />
<line x1="223" y1="235.5" x2="1033" y2="235.5" stroke="#1a1a1a" stroke-width="1" />
<line x1="223" y1="239.5" x2="1033" y2="239.5" stroke="#2c2c2c" stroke-width="1" />
<line x1="223" y1="244.5" x2="1033" y2="244.5" stroke="#1a1a1a" stroke-width="1" />
<line x1="223" y1="248.5" x2="1033" y2="248.5" stroke="#1a1a1a" stroke-width="1" />
<line x1="223" y1="253.5" x2="1033" y2="253.5" stroke="#1a1a1a" stroke-width="1" />
<line x1="223" y1="257.5" x2="1033" y2="257.5" stroke="#1a1a1a" stroke-width="1" />
<line x1="223" y1="262.5" x2="1033" y2="262.5" stroke="#2c2c2c" stroke-width="1" />
<line x1="223" y1="267.5" x2="1033" y2="267.5" stroke="#1a1a1a" stroke-width="1" />
<line x1="223" y1="271.5" x2="1033" y2="271.5" stroke="#1a1a1a" stroke-width="1" />
<line x1="223" y1="276.5" x2="1033" y2="276.5" stroke="#1a1a1a" stroke-width="1" />
<line x1="223" y1="280.5" x2="1033" y2="280.5" stroke="#1a1a1a" stroke-width="1" />
<line x1="223" y1="285.5" x2="1033" y2="285.5" stroke="#2c2c2c" stroke-width="1" />
<line x1="223" y1="289.5" x2="1033" y2="289.5" stroke="#1a1a1a" stroke-width="1" />
<line x1="223" y1="294.5" x2="1033" y2="294.5" stroke="#1a1a1a" stroke-width="1" />
<line x1="223" y1="299.5" x2="1033" y2="299.5" stroke="#1a1a1a" stroke-width="1" />
<line x1="223" y1="303.5" x2="1033" y2="303.5" stroke="#1a1a1a" stroke-width="1" />
<line x1="223" y1="308.5" x2="1033" y2="308.5" stroke="#2c2c2c" stroke-width="1" />
<line x1="223" y1="312.5" x2="1033" y2="312.5" stroke="#1a1a1a" stroke-width="1" />
<line x1="223" y1="317.5" x2="1033" y2="317.5" stroke="#1a1a1a" stroke-width="1" />
<line x1="223" y1="321.5" x2="1033" y2="321.5" stroke="#1a1a1a" stroke-width="1" />
<line x1="223" y1="326.5" x2="1033" y2="326.5" stroke="#1a1a1a" stroke-width="1" />
<line x1="223" y1="330.5" x2="1033" y2="330.5" stroke="#2c2c2c" stroke-width="1" />
<line x1="223" y1="335.5" x2="1033" y2="335.5" stroke="#1a1a1a" stroke-width="1" />
<line x1="223" y1="340.5" x2="1033" y2="340.5" stroke="#1a1a1a" stroke-width="1" />
<line x1="223" y1="344.5" x2="1033" y2="344.5" stroke="#1a1a1a" stroke-width="1" />
<line x1="223" y1="349.5" x2="1033" y2="349.5" stroke="#1a1a1a" stroke-width="1" />
<line x1="223" y1="353.5" x2="1033" y2="353.5" stroke="#2c2c2c" stroke-width="1" />
<line x1="223" y1="358.5" x2="1033" y2="358.5" stroke="#1a1a1a" stroke-width="1" />
<line x1="223" y1="362.5" x2="1033" y2="362.5" stroke="#1a1a1a" stroke-width="1" />
<line x1="223" y1="367.5" x2="1033" y2="367.5" stroke="#1a1a1a" stroke-width="1" />
<line x1="223" y1="372.5" x2="1033" y2="372.5" stroke="#1a1a1a" stroke-width="1" />
<line x1="223" y1="376.5" x2="1033" y2="376.5" stroke="#2c2c2c" stroke-width="1" />
<line x1="223" y1="381.5" x2="1033" y2="381.5" stroke="#1a1a1a" stroke-width="1" />
<line x1="223" y1="385.5" x2="1033" y2="385.5" stroke="#1a1a1a" stroke-width="1" />
<line x1="223" y1="390.5" x2="1033" y2="390.5" stroke="#1a1a1a" stroke-width="1" />
<line x1="223" y1="394.5" x2="1033" y2="394.5" stroke="#1a1a1a" stroke-width="1" />
<line x1="223" y1="399.5" x2="1033" y2="399.5" stroke="#2c2c2c" stroke-width="1" />
<line x1="223" y1="403.5" x2="1033" y2="403.5" stroke="#1a1a1a" stroke-width="1" />
<line x1="223" y1="408.5" x2="1033" y2="408.5" stroke="#1a1a1a" stroke-width="1" />
<line x1="223" y1="413.5" x2="1033" y2="413.5" stroke="#1a1a1a" stroke-width="1" />
<line x1="223" y1="417.5" x2="1033" y2="417.5" stroke="#1a1a1a" stroke-width="1" />
<line x1="223" y1="422.5" x2="1033" y2="422.5" stroke="#2c2c2c" stroke-width="1" />
<line x1="223" y1="426.5" x2="1033" y2="426.5" stroke="#1a1a1a" stroke-width="1" />
<line x1="223" y1="431.5" x2="1033" y2="431.5" stroke="#1a1a1a" stroke-width="1" />
<line x1="223" y1="435.5" x2="1033" y2="435.5" stroke="#1a1a1a" stroke-width="1" />
<line x1="223" y1="440.5" x2="1033" y2="440.5" stroke="#1a1a1a" stroke-width="1" />
<line x1="223" y1="445.5" x2="1033" y2="445.5" stroke="#2c2c2c" stroke-width="1" />
<line x1="223" y1="449.5" x2="1033" y2="449.5" stroke="#1a1a1a" stroke-width="1" />
<line x1="223" y1="454.5" x2="1033" y2="454.5" stroke="#1a1a1a" stroke-width="1" />
<line x1="223" y1="458.5" x2="1033" y2="458.5" stroke="#1a1a1a" stroke-width="1" />
<line x1="223" y1="463.5" x2="1033" y2="463.5" stroke="#1a1a1a" stroke-width="1" />
<line x1="223" y1="467.5" x2="1033" y2="467.5" stroke="#2c2c2c" stroke-width="1" />
<line x1="223" y1="472.5" x2="1033" y2="472.5" stroke="#1a1a1a" stroke-width="1" />
<line x1="223" y1="477.5" x2="1033" y2="477.5" stroke="#1a1a1a" stroke-width="1" />
<line x1="223" y1="481.5" x2="1033" y2="481.5" stroke="#1a1a1a" stroke-width="1" />
<line x1="229.5" y1="202" x2="229.5" y2="486" stroke="#2c2c2c" stroke-width="1" />
<line x1="275.5" y1="202" x2="275.5" y2="486" stroke="#1a1a1a" stroke-width="1" />
<line x1="308.5" y1="202" x2="308.5" y2="486" stroke="#1a1a1a" stroke-width="1" />
<line x1="333.5" y1="202" x2="333.5" y2="486" stroke="#1a1a1a" stroke-width="1" />
<line x1="354.5" y1="202" x2="354.5" y2="486" stroke="#1a1a1a" stroke-width="1" />
<line x1="372.5" y1="202" x2="372.5" y2="486" stroke="#1a1a1a" stroke-width="1" />
<line x1="387.5" y1="202" x2="387.5" y2="486" stroke="#1a1a1a" stroke-width="1" />
<line x1="400.5" y1="202" x2="400.5" y2="486" stroke="#1a1a1a" stroke-width="1" />
<line x1="412.5" y1="202" x2="412.5" y2="486" stroke="#2c2c2c" stroke-width="1" />
<line x1="491.5" y1="202" x2="491.5" y2="486" stroke="#1a1a1a" stroke-width="1" />
<line x1="538.5" y1="202" x2="538.5" y2="486" stroke="#1a1a1a" stroke-width="1" />
<line x1="570.5" y1="202" x2="570.5" y2="486" stroke="#1a1a1a" stroke-width="1" />
<line x1="596.5" y1="202" x2="596.5" y2="486" stroke="#1a1a1a" stroke-width="1" />
<line x1="617.5" y1="202" x2="617.5" y2="486" stroke="#1a1a1a" stroke-width="1" />
<line x1="634.5" y1="202" x2="634.5" y2="486" stroke="#1a1a1a" stroke-width="1" />
<line x1="649.5" y1="202" x2="649.5" y2="486" stroke="#1a1a1a" stroke-width="1" />
<line x1="663.5" y1="202" x2="663.5" y2="486" stroke="#1a1a1a" stroke-width="1" />
<line x1="675.5" y1="202" x2="675.5" y2="486" stroke="#2c2c2c" stroke-width="1" />
<line x1="754.5" y1="202" x2="754.5" y2="486" stroke="#1a1a1a" stroke-width="1" />
<line x1="800.5" y1="202" x2="800.5" y2="486" stroke="#1a1a1a" stroke-width="1" />
<line x1="833.5" y1="202" x2="833.5" y2="486" stroke="#1a1a1a" stroke-width="1" />
<line x1="858.5" y1="202" x2="858.5" y2="486" stroke="#1a1a1a" stroke-width="1" />
<line x1="879.5" y1="202" x2="879.5" y2="486" stroke="#1a1a1a" stroke-width="1" />
<line x1="897.5" y1="202" x2="897.5" y2="486" stroke="#1a1a1a" stroke-width="1" />
<line x1="912.5" y1="202" x2="912.5" y2="486" stroke="#1a1a1a" stroke-width="1" />
<line x1="925.5" y1="202" x2="925.5" y2="486" stroke="#1a1a1a" stroke-width="1" />
<line x1="937.5" y1="202" x2="937.5" y2="486" stroke="#2c2c2c" stroke-width="1" />
<line x1="1017.5" y1="202" x2="1017.5" y2="486" stroke="#1a1a1a" stroke-width="1" />
<line x1="1028.5" y1="202" x2="1028.5" y2="486" stroke="#2c2c2c" stroke-width="1" />
</g>
<path d="M228.3,481 L228.3,440.9 L237.0,440.9 L274.8,422.8 L315.5,399.1 L341.3,391.0 L361.6,398.4 L380.0,419.4 L394.8,418.3 L407.8,389.5 L419.8,374.4 L430.8,378.5 L440.0,400.6 L449.3,434.8 L456.7,430.5 L456.70,430.50 C457.25,430.15 458.30,429.78 460.00,428.40 C461.70,427.02 464.60,422.55 466.90,422.20 C469.20,421.85 471.60,423.30 473.80,426.30 C476.00,429.30 477.57,436.85 480.10,440.20 C482.63,443.55 486.82,445.60 489.00,446.40 C491.18,447.20 491.57,447.65 493.20,445.00 C494.83,442.35 497.07,433.27 498.80,430.50 C500.53,427.73 501.77,427.95 503.60,428.40 C505.43,428.85 507.03,434.93 509.80,433.20 C512.57,431.47 517.67,420.07 520.20,418.00 C522.73,415.93 522.92,415.95 525.00,420.80 C527.08,425.65 530.62,442.03 532.70,447.10 C534.78,452.17 535.20,453.33 537.50,451.20 C539.80,449.07 544.42,436.95 546.50,434.30 C548.58,431.65 548.03,431.43 550.00,435.30 C551.97,439.17 555.53,455.30 558.30,457.50 C561.07,459.70 563.83,448.28 566.60,448.50 C569.37,448.72 572.47,458.17 574.90,458.80 C577.33,459.43 579.23,452.07 581.20,452.30 C583.17,452.53 584.73,460.10 586.70,460.20 C588.67,460.30 591.03,453.47 593.00,452.90 C594.97,452.33 596.78,456.90 598.50,456.80 C600.22,456.70 601.35,451.10 603.30,452.30 C605.25,453.50 608.23,462.05 610.20,464.00 C612.17,465.95 613.25,463.37 615.10,464.00 C616.95,464.63 619.33,468.73 621.30,467.80 C623.27,466.87 625.17,458.40 626.90,458.40 C628.63,458.40 630.32,466.45 631.70,467.80 C633.08,469.15 634.07,466.17 635.20,466.50 C636.33,466.83 636.92,470.02 638.50,469.80 C640.08,469.58 642.75,465.83 644.70,465.20 C646.65,464.57 648.35,465.30 650.20,466.00 C652.05,466.70 654.18,469.63 655.80,469.40 C657.42,469.17 658.52,465.23 659.90,464.60 C661.28,463.97 662.48,464.58 664.10,465.60 C665.72,466.62 668.10,470.47 669.60,470.70 C671.10,470.93 671.48,468.02 673.10,467.00 C674.72,465.98 677.57,464.13 679.30,464.60 C681.03,465.07 682.00,468.55 683.50,469.80 C685.00,471.05 687.15,472.17 688.30,472.10 C689.45,472.03 689.37,469.63 690.40,469.40 C691.43,469.17 693.12,469.95 694.50,470.70 C695.88,471.45 696.85,474.28 698.70,473.90 C700.55,473.52 703.42,468.52 705.60,468.40 C707.78,468.28 709.72,472.67 711.80,473.20 C713.88,473.73 716.48,471.37 718.10,471.60 C719.72,471.83 720.23,474.37 721.50,474.60 C722.77,474.83 724.08,473.47 725.70,473.00 C727.32,472.53 729.70,471.53 731.20,471.80 C732.70,472.07 733.53,474.48 734.70,474.60 C735.87,474.72 736.35,472.38 738.20,472.50 C740.05,472.62 743.38,475.13 745.80,475.30 C748.22,475.47 750.63,473.73 752.70,473.50 C754.77,473.27 756.23,473.67 758.20,473.90 C760.17,474.13 761.95,474.50 764.50,474.90 C767.05,475.30 770.17,476.35 773.50,476.30 C776.83,476.25 781.50,474.47 784.50,474.60 C787.50,474.73 788.03,476.75 791.50,477.10 C794.97,477.45 801.38,476.65 805.30,476.70 C809.22,476.75 811.78,477.28 815.00,477.40 C818.22,477.52 820.78,477.41 824.62,477.41 C828.45,477.40 834.10,477.33 838.01,477.36 C841.92,477.39 845.15,477.58 848.08,477.61 C851.00,477.65 852.47,477.48 855.55,477.55 C858.64,477.63 863.63,478.08 866.59,478.05 C869.56,478.02 871.10,477.35 873.34,477.37 C875.59,477.39 877.02,478.22 880.07,478.17 C883.12,478.13 887.38,477.03 891.62,477.10 C895.85,477.17 901.29,478.41 905.48,478.58 C909.66,478.76 913.62,478.36 916.71,478.14 C919.79,477.92 921.05,477.41 923.97,477.29 C926.88,477.17 931.24,477.35 934.19,477.43 C937.15,477.51 939.42,477.64 941.72,477.76 C944.01,477.87 945.33,477.96 947.96,478.13 C950.58,478.30 954.20,478.70 957.48,478.77 C960.76,478.83 964.27,478.56 967.63,478.54 C970.99,478.51 974.36,478.71 977.63,478.64 C980.91,478.57 983.35,478.02 987.29,478.13 C991.23,478.24 996.82,479.17 1001.27,479.31 C1005.72,479.44 1010.45,479.13 1013.99,478.96 C1017.53,478.80 1020.18,478.45 1022.52,478.31 C1024.85,478.17 1027.09,478.03 1028.00,478.13 C1028.91,478.22 1028.00,478.77 1028.00,478.90 L1028,481 Z" fill="#2a5a90" fill-opacity="0.55"/>
<path d="M228.3,440.9 L237.0,440.9 L274.8,422.8 L315.5,399.1 L341.3,391.0 L361.6,398.4 L380.0,419.4 L394.8,418.3 L407.8,389.5 L419.8,374.4 L430.8,378.5 L440.0,400.6 L449.3,434.8 L456.7,430.5 L456.70,430.50 C457.25,430.15 458.30,429.78 460.00,428.40 C461.70,427.02 464.60,422.55 466.90,422.20 C469.20,421.85 471.60,423.30 473.80,426.30 C476.00,429.30 477.57,436.85 480.10,440.20 C482.63,443.55 486.82,445.60 489.00,446.40 C491.18,447.20 491.57,447.65 493.20,445.00 C494.83,442.35 497.07,433.27 498.80,430.50 C500.53,427.73 501.77,427.95 503.60,428.40 C505.43,428.85 507.03,434.93 509.80,433.20 C512.57,431.47 517.67,420.07 520.20,418.00 C522.73,415.93 522.92,415.95 525.00,420.80 C527.08,425.65 530.62,442.03 532.70,447.10 C534.78,452.17 535.20,453.33 537.50,451.20 C539.80,449.07 544.42,436.95 546.50,434.30 C548.58,431.65 548.03,431.43 550.00,435.30 C551.97,439.17 555.53,455.30 558.30,457.50 C561.07,459.70 563.83,448.28 566.60,448.50 C569.37,448.72 572.47,458.17 574.90,458.80 C577.33,459.43 579.23,452.07 581.20,452.30 C583.17,452.53 584.73,460.10 586.70,460.20 C588.67,460.30 591.03,453.47 593.00,452.90 C594.97,452.33 596.78,456.90 598.50,456.80 C600.22,456.70 601.35,451.10 603.30,452.30 C605.25,453.50 608.23,462.05 610.20,464.00 C612.17,465.95 613.25,463.37 615.10,464.00 C616.95,464.63 619.33,468.73 621.30,467.80 C623.27,466.87 625.17,458.40 626.90,458.40 C628.63,458.40 630.32,466.45 631.70,467.80 C633.08,469.15 634.07,466.17 635.20,466.50 C636.33,466.83 636.92,470.02 638.50,469.80 C640.08,469.58 642.75,465.83 644.70,465.20 C646.65,464.57 648.35,465.30 650.20,466.00 C652.05,466.70 654.18,469.63 655.80,469.40 C657.42,469.17 658.52,465.23 659.90,464.60 C661.28,463.97 662.48,464.58 664.10,465.60 C665.72,466.62 668.10,470.47 669.60,470.70 C671.10,470.93 671.48,468.02 673.10,467.00 C674.72,465.98 677.57,464.13 679.30,464.60 C681.03,465.07 682.00,468.55 683.50,469.80 C685.00,471.05 687.15,472.17 688.30,472.10 C689.45,472.03 689.37,469.63 690.40,469.40 C691.43,469.17 693.12,469.95 694.50,470.70 C695.88,471.45 696.85,474.28 698.70,473.90 C700.55,473.52 703.42,468.52 705.60,468.40 C707.78,468.28 709.72,472.67 711.80,473.20 C713.88,473.73 716.48,471.37 718.10,471.60 C719.72,471.83 720.23,474.37 721.50,474.60 C722.77,474.83 724.08,473.47 725.70,473.00 C727.32,472.53 729.70,471.53 731.20,471.80 C732.70,472.07 733.53,474.48 734.70,474.60 C735.87,474.72 736.35,472.38 738.20,472.50 C740.05,472.62 743.38,475.13 745.80,475.30 C748.22,475.47 750.63,473.73 752.70,473.50 C754.77,473.27 756.23,473.67 758.20,473.90 C760.17,474.13 761.95,474.50 764.50,474.90 C767.05,475.30 770.17,476.35 773.50,476.30 C776.83,476.25 781.50,474.47 784.50,474.60 C787.50,474.73 788.03,476.75 791.50,477.10 C794.97,477.45 801.38,476.65 805.30,476.70 C809.22,476.75 811.78,477.28 815.00,477.40 C818.22,477.52 820.78,477.41 824.62,477.41 C828.45,477.40 834.10,477.33 838.01,477.36 C841.92,477.39 845.15,477.58 848.08,477.61 C851.00,477.65 852.47,477.48 855.55,477.55 C858.64,477.63 863.63,478.08 866.59,478.05 C869.56,478.02 871.10,477.35 873.34,477.37 C875.59,477.39 877.02,478.22 880.07,478.17 C883.12,478.13 887.38,477.03 891.62,477.10 C895.85,477.17 901.29,478.41 905.48,478.58 C909.66,478.76 913.62,478.36 916.71,478.14 C919.79,477.92 921.05,477.41 923.97,477.29 C926.88,477.17 931.24,477.35 934.19,477.43 C937.15,477.51 939.42,477.64 941.72,477.76 C944.01,477.87 945.33,477.96 947.96,478.13 C950.58,478.30 954.20,478.70 957.48,478.77 C960.76,478.83 964.27,478.56 967.63,478.54 C970.99,478.51 974.36,478.71 977.63,478.64 C980.91,478.57 983.35,478.02 987.29,478.13 C991.23,478.24 996.82,479.17 1001.27,479.31 C1005.72,479.44 1010.45,479.13 1013.99,478.96 C1017.53,478.80 1020.18,478.45 1022.52,478.31 C1024.85,478.17 1027.09,478.03 1028.00,478.13 C1028.91,478.22 1028.00,478.77 1028.00,478.90" fill="none" stroke="#4688c8" stroke-width="1.0" stroke-linejoin="round"/>
<rect x="223" y="481" width="810" height="5" fill="#000" fill-opacity="0.6"/>
<clipPath id="pc"><rect x="223" y="202" width="810" height="280"/></clipPath>
<path d="M229,264 C233.00,264.17 244.67,264.67 253,265 C261.33,265.33 269.67,265.40 279,266 C288.33,266.60 300.00,267.67 309,268.6 C318.00,269.53 325.33,270.27 333,271.6 C340.67,272.93 348.00,274.70 355,276.6 C362.00,278.50 368.33,280.43 375,283 C381.67,285.57 388.67,288.77 395,292 C401.33,295.23 406.67,298.40 413,302.4 C419.33,306.40 426.00,310.73 433,316 C440.00,321.27 446.67,326.33 455,334 C463.33,341.67 472.00,351.00 483,362 C494.00,373.00 500.75,380.00 521,400 C541.25,420.00 590.58,468.33 604.5,482" fill="none" stroke="#5563f4" stroke-width="2.8" clip-path="url(#pc)"/>
<g shape-rendering="crispEdges">
<line x1="229.5" y1="487" x2="229.5" y2="497" stroke="#a0a0a0" stroke-width="1" />
<line x1="275.5" y1="487" x2="275.5" y2="493" stroke="#a0a0a0" stroke-width="1" />
<line x1="308.5" y1="487" x2="308.5" y2="493" stroke="#a0a0a0" stroke-width="1" />
<line x1="333.5" y1="487" x2="333.5" y2="493" stroke="#a0a0a0" stroke-width="1" />
<line x1="354.5" y1="487" x2="354.5" y2="493" stroke="#a0a0a0" stroke-width="1" />
<line x1="372.5" y1="487" x2="372.5" y2="493" stroke="#a0a0a0" stroke-width="1" />
<line x1="387.5" y1="487" x2="387.5" y2="493" stroke="#a0a0a0" stroke-width="1" />
<line x1="400.5" y1="487" x2="400.5" y2="493" stroke="#a0a0a0" stroke-width="1" />
<line x1="412.5" y1="487" x2="412.5" y2="497" stroke="#a0a0a0" stroke-width="1" />
<line x1="491.5" y1="487" x2="491.5" y2="493" stroke="#a0a0a0" stroke-width="1" />
<line x1="538.5" y1="487" x2="538.5" y2="493" stroke="#a0a0a0" stroke-width="1" />
<line x1="570.5" y1="487" x2="570.5" y2="493" stroke="#a0a0a0" stroke-width="1" />
<line x1="596.5" y1="487" x2="596.5" y2="493" stroke="#a0a0a0" stroke-width="1" />
<line x1="617.5" y1="487" x2="617.5" y2="493" stroke="#a0a0a0" stroke-width="1" />
<line x1="634.5" y1="487" x2="634.5" y2="493" stroke="#a0a0a0" stroke-width="1" />
<line x1="649.5" y1="487" x2="649.5" y2="493" stroke="#a0a0a0" stroke-width="1" />
<line x1="663.5" y1="487" x2="663.5" y2="493" stroke="#a0a0a0" stroke-width="1" />
<line x1="675.5" y1="487" x2="675.5" y2="497" stroke="#a0a0a0" stroke-width="1" />
<line x1="754.5" y1="487" x2="754.5" y2="493" stroke="#a0a0a0" stroke-width="1" />
<line x1="800.5" y1="487" x2="800.5" y2="493" stroke="#a0a0a0" stroke-width="1" />
<line x1="833.5" y1="487" x2="833.5" y2="493" stroke="#a0a0a0" stroke-width="1" />
<line x1="858.5" y1="487" x2="858.5" y2="493" stroke="#a0a0a0" stroke-width="1" />
<line x1="879.5" y1="487" x2="879.5" y2="493" stroke="#a0a0a0" stroke-width="1" />
<line x1="897.5" y1="487" x2="897.5" y2="493" stroke="#a0a0a0" stroke-width="1" />
<line x1="912.5" y1="487" x2="912.5" y2="493" stroke="#a0a0a0" stroke-width="1" />
<line x1="925.5" y1="487" x2="925.5" y2="493" stroke="#a0a0a0" stroke-width="1" />
<line x1="937.5" y1="487" x2="937.5" y2="497" stroke="#a0a0a0" stroke-width="1" />
<line x1="1017.5" y1="487" x2="1017.5" y2="493" stroke="#a0a0a0" stroke-width="1" />
<line x1="1028.5" y1="487" x2="1028.5" y2="497" stroke="#a0a0a0" stroke-width="1" />
</g>
<text x="227.00" y="511.00" font-size="11" fill="#cfcfcf" stroke="#cfcfcf" stroke-width="0.25" text-anchor="middle">Hz</text>
<text x="275.44" y="511.00" font-size="11" fill="#707070" stroke="#707070" stroke-width="0.25" text-anchor="middle">30</text>
<text x="308.25" y="511.00" font-size="11" fill="#707070" stroke="#707070" stroke-width="0.25" text-anchor="middle">40</text>
<text x="333.70" y="511.00" font-size="11" fill="#707070" stroke="#707070" stroke-width="0.25" text-anchor="middle">50</text>
<text x="354.49" y="511.00" font-size="11" fill="#707070" stroke="#707070" stroke-width="0.25" text-anchor="middle">60</text>
<text x="372.07" y="511.00" font-size="11" fill="#707070" stroke="#707070" stroke-width="0.25" text-anchor="middle">70</text>
<text x="387.30" y="511.00" font-size="11" fill="#707070" stroke="#707070" stroke-width="0.25" text-anchor="middle">80</text>
<text x="412.75" y="511.00" font-size="11" fill="#cfcfcf" stroke="#cfcfcf" stroke-width="0.25" text-anchor="middle">100</text>
<text x="491.80" y="511.00" font-size="11" fill="#707070" stroke="#707070" stroke-width="0.25" text-anchor="middle">200</text>
<text x="538.04" y="511.00" font-size="11" fill="#707070" stroke="#707070" stroke-width="0.25" text-anchor="middle">300</text>
<text x="570.85" y="511.00" font-size="11" fill="#707070" stroke="#707070" stroke-width="0.25" text-anchor="middle">400</text>
<text x="596.30" y="511.00" font-size="11" fill="#707070" stroke="#707070" stroke-width="0.25" text-anchor="middle">500</text>
<text x="617.09" y="511.00" font-size="11" fill="#707070" stroke="#707070" stroke-width="0.25" text-anchor="middle">600</text>
<text x="649.90" y="511.00" font-size="11" fill="#707070" stroke="#707070" stroke-width="0.25" text-anchor="middle">800</text>
<text x="675.35" y="511.00" font-size="11" fill="#cfcfcf" stroke="#cfcfcf" stroke-width="0.25" text-anchor="middle">1k</text>
<text x="754.40" y="511.00" font-size="11" fill="#707070" stroke="#707070" stroke-width="0.25" text-anchor="middle">2k</text>
<text x="800.64" y="511.00" font-size="11" fill="#707070" stroke="#707070" stroke-width="0.25" text-anchor="middle">3k</text>
<text x="833.45" y="511.00" font-size="11" fill="#707070" stroke="#707070" stroke-width="0.25" text-anchor="middle">4k</text>
<text x="858.90" y="511.00" font-size="11" fill="#707070" stroke="#707070" stroke-width="0.25" text-anchor="middle">5k</text>
<text x="879.69" y="511.00" font-size="11" fill="#707070" stroke="#707070" stroke-width="0.25" text-anchor="middle">6k</text>
<text x="897.27" y="511.00" font-size="11" fill="#707070" stroke="#707070" stroke-width="0.25" text-anchor="middle">7k</text>
<text x="912.50" y="511.00" font-size="11" fill="#707070" stroke="#707070" stroke-width="0.25" text-anchor="middle">8k</text>
<text x="937.95" y="511.00" font-size="11" fill="#cfcfcf" stroke="#cfcfcf" stroke-width="0.25" text-anchor="middle">10k</text>
<text x="1017.00" y="511.00" font-size="11" fill="#707070" stroke="#707070" stroke-width="0.25" text-anchor="middle">20k</text>
<g shape-rendering="crispEdges">
<line x1="1034" y1="207.5" x2="1040.5" y2="207.5" stroke="#8c8c8c" stroke-width="1" />
<line x1="1034" y1="212.5" x2="1040.5" y2="212.5" stroke="#8c8c8c" stroke-width="1" />
<line x1="1034" y1="216.5" x2="1044" y2="216.5" stroke="#a8a8a8" stroke-width="1" />
<line x1="1034" y1="221.5" x2="1040.5" y2="221.5" stroke="#8c8c8c" stroke-width="1" />
<line x1="1034" y1="225.5" x2="1040.5" y2="225.5" stroke="#8c8c8c" stroke-width="1" />
<line x1="1034" y1="230.5" x2="1040.5" y2="230.5" stroke="#8c8c8c" stroke-width="1" />
<line x1="1034" y1="235.5" x2="1040.5" y2="235.5" stroke="#8c8c8c" stroke-width="1" />
<line x1="1034" y1="239.5" x2="1044" y2="239.5" stroke="#a8a8a8" stroke-width="1" />
<line x1="1034" y1="244.5" x2="1040.5" y2="244.5" stroke="#8c8c8c" stroke-width="1" />
<line x1="1034" y1="248.5" x2="1040.5" y2="248.5" stroke="#8c8c8c" stroke-width="1" />
<line x1="1034" y1="253.5" x2="1040.5" y2="253.5" stroke="#8c8c8c" stroke-width="1" />
<line x1="1034" y1="257.5" x2="1040.5" y2="257.5" stroke="#8c8c8c" stroke-width="1" />
<line x1="1034" y1="262.5" x2="1044" y2="262.5" stroke="#a8a8a8" stroke-width="1" />
<line x1="1034" y1="267.5" x2="1040.5" y2="267.5" stroke="#8c8c8c" stroke-width="1" />
<line x1="1034" y1="271.5" x2="1040.5" y2="271.5" stroke="#8c8c8c" stroke-width="1" />
<line x1="1034" y1="276.5" x2="1040.5" y2="276.5" stroke="#8c8c8c" stroke-width="1" />
<line x1="1034" y1="280.5" x2="1040.5" y2="280.5" stroke="#8c8c8c" stroke-width="1" />
<line x1="1034" y1="285.5" x2="1044" y2="285.5" stroke="#a8a8a8" stroke-width="1" />
<line x1="1034" y1="289.5" x2="1040.5" y2="289.5" stroke="#8c8c8c" stroke-width="1" />
<line x1="1034" y1="294.5" x2="1040.5" y2="294.5" stroke="#8c8c8c" stroke-width="1" />
<line x1="1034" y1="299.5" x2="1040.5" y2="299.5" stroke="#8c8c8c" stroke-width="1" />
<line x1="1034" y1="303.5" x2="1040.5" y2="303.5" stroke="#8c8c8c" stroke-width="1" />
<line x1="1034" y1="308.5" x2="1044" y2="308.5" stroke="#a8a8a8" stroke-width="1" />
<line x1="1034" y1="312.5" x2="1040.5" y2="312.5" stroke="#8c8c8c" stroke-width="1" />
<line x1="1034" y1="317.5" x2="1040.5" y2="317.5" stroke="#8c8c8c" stroke-width="1" />
<line x1="1034" y1="321.5" x2="1040.5" y2="321.5" stroke="#8c8c8c" stroke-width="1" />
<line x1="1034" y1="326.5" x2="1040.5" y2="326.5" stroke="#8c8c8c" stroke-width="1" />
<line x1="1034" y1="330.5" x2="1044" y2="330.5" stroke="#a8a8a8" stroke-width="1" />
<line x1="1034" y1="335.5" x2="1040.5" y2="335.5" stroke="#8c8c8c" stroke-width="1" />
<line x1="1034" y1="340.5" x2="1040.5" y2="340.5" stroke="#8c8c8c" stroke-width="1" />
<line x1="1034" y1="344.5" x2="1040.5" y2="344.5" stroke="#8c8c8c" stroke-width="1" />
<line x1="1034" y1="349.5" x2="1040.5" y2="349.5" stroke="#8c8c8c" stroke-width="1" />
<line x1="1034" y1="353.5" x2="1044" y2="353.5" stroke="#a8a8a8" stroke-width="1" />
<line x1="1034" y1="358.5" x2="1040.5" y2="358.5" stroke="#8c8c8c" stroke-width="1" />
<line x1="1034" y1="362.5" x2="1040.5" y2="362.5" stroke="#8c8c8c" stroke-width="1" />
<line x1="1034" y1="367.5" x2="1040.5" y2="367.5" stroke="#8c8c8c" stroke-width="1" />
<line x1="1034" y1="372.5" x2="1040.5" y2="372.5" stroke="#8c8c8c" stroke-width="1" />
<line x1="1034" y1="376.5" x2="1044" y2="376.5" stroke="#a8a8a8" stroke-width="1" />
<line x1="1034" y1="381.5" x2="1040.5" y2="381.5" stroke="#8c8c8c" stroke-width="1" />
<line x1="1034" y1="385.5" x2="1040.5" y2="385.5" stroke="#8c8c8c" stroke-width="1" />
<line x1="1034" y1="390.5" x2="1040.5" y2="390.5" stroke="#8c8c8c" stroke-width="1" />
<line x1="1034" y1="394.5" x2="1040.5" y2="394.5" stroke="#8c8c8c" stroke-width="1" />
<line x1="1034" y1="399.5" x2="1044" y2="399.5" stroke="#a8a8a8" stroke-width="1" />
<line x1="1034" y1="403.5" x2="1040.5" y2="403.5" stroke="#8c8c8c" stroke-width="1" />
<line x1="1034" y1="408.5" x2="1040.5" y2="408.5" stroke="#8c8c8c" stroke-width="1" />
<line x1="1034" y1="413.5" x2="1040.5" y2="413.5" stroke="#8c8c8c" stroke-width="1" />
<line x1="1034" y1="417.5" x2="1040.5" y2="417.5" stroke="#8c8c8c" stroke-width="1" />
<line x1="1034" y1="422.5" x2="1044" y2="422.5" stroke="#a8a8a8" stroke-width="1" />
<line x1="1034" y1="426.5" x2="1040.5" y2="426.5" stroke="#8c8c8c" stroke-width="1" />
<line x1="1034" y1="431.5" x2="1040.5" y2="431.5" stroke="#8c8c8c" stroke-width="1" />
<line x1="1034" y1="435.5" x2="1040.5" y2="435.5" stroke="#8c8c8c" stroke-width="1" />
<line x1="1034" y1="440.5" x2="1040.5" y2="440.5" stroke="#8c8c8c" stroke-width="1" />
<line x1="1034" y1="445.5" x2="1044" y2="445.5" stroke="#a8a8a8" stroke-width="1" />
<line x1="1034" y1="449.5" x2="1040.5" y2="449.5" stroke="#8c8c8c" stroke-width="1" />
<line x1="1034" y1="454.5" x2="1040.5" y2="454.5" stroke="#8c8c8c" stroke-width="1" />
<line x1="1034" y1="458.5" x2="1040.5" y2="458.5" stroke="#8c8c8c" stroke-width="1" />
<line x1="1034" y1="463.5" x2="1040.5" y2="463.5" stroke="#8c8c8c" stroke-width="1" />
<line x1="1034" y1="467.5" x2="1044" y2="467.5" stroke="#a8a8a8" stroke-width="1" />
<line x1="1034" y1="472.5" x2="1040.5" y2="472.5" stroke="#8c8c8c" stroke-width="1" />
<line x1="1034" y1="477.5" x2="1040.5" y2="477.5" stroke="#8c8c8c" stroke-width="1" />
<line x1="1034" y1="481.5" x2="1040.5" y2="481.5" stroke="#8c8c8c" stroke-width="1" />
</g>
<text x="1049.00" y="210.00" font-size="11.5" fill="#bdbdbd" stroke="#bdbdbd" stroke-width="0.25">dB</text>
<text x="1049.00" y="243.88" font-size="11.5" fill="#bdbdbd" stroke="#bdbdbd" stroke-width="0.25">5</text>
<text x="1049.00" y="266.70" font-size="11.5" fill="#bdbdbd" stroke="#bdbdbd" stroke-width="0.25">0</text>
<text x="1049.00" y="289.52" font-size="11.5" fill="#bdbdbd" stroke="#bdbdbd" stroke-width="0.25">-5</text>
<text x="1049.00" y="312.34" font-size="11.5" fill="#bdbdbd" stroke="#bdbdbd" stroke-width="0.25">-10</text>
<text x="1049.00" y="335.16" font-size="11.5" fill="#bdbdbd" stroke="#bdbdbd" stroke-width="0.25">-15</text>
<text x="1049.00" y="357.98" font-size="11.5" fill="#bdbdbd" stroke="#bdbdbd" stroke-width="0.25">-20</text>
<text x="1049.00" y="380.80" font-size="11.5" fill="#bdbdbd" stroke="#bdbdbd" stroke-width="0.25">-25</text>
<text x="1049.00" y="403.62" font-size="11.5" fill="#bdbdbd" stroke="#bdbdbd" stroke-width="0.25">-30</text>
<text x="1049.00" y="426.44" font-size="11.5" fill="#bdbdbd" stroke="#bdbdbd" stroke-width="0.25">-35</text>
<text x="1049.00" y="449.26" font-size="11.5" fill="#bdbdbd" stroke="#bdbdbd" stroke-width="0.25">-40</text>
<text x="1049.00" y="472.08" font-size="11.5" fill="#bdbdbd" stroke="#bdbdbd" stroke-width="0.25">-45</text>
<text x="258.80" y="547.30" font-size="14" fill="#a9a9a9" stroke="#a9a9a9" stroke-width="0.25" textLength="39.00" lengthAdjust="spacingAndGlyphs">Types:</text>
<rect x="303.5" y="530.5" width="160" height="23" fill="#1a1a1a" stroke="#2e2e2e" stroke-width="1" rx="2"/>
<text x="310.50" y="547.30" font-size="14" fill="#dadada" stroke="#dadada" stroke-width="0.25" textLength="39.00" lengthAdjust="spacingAndGlyphs">Bessel</text>
<polyline points="448,539.5 452.3,543.5 456.6,539.5" fill="none" stroke="#d0d0d0" stroke-width="1.6"/>
<text x="508.50" y="547.30" font-size="14" fill="#a9a9a9" stroke="#a9a9a9" stroke-width="0.25" textLength="45.00" lengthAdjust="spacingAndGlyphs">Modes:</text>
<rect x="558.5" y="530.5" width="161" height="23" fill="#1a1a1a" stroke="#2e2e2e" stroke-width="1" rx="2"/>
<text x="565.50" y="547.30" font-size="14" fill="#dadada" stroke="#dadada" stroke-width="0.25" textLength="54.00" lengthAdjust="spacingAndGlyphs">LowPass</text>
<polyline points="703.5,539.5 707.8,543.5 712.1,539.5" fill="none" stroke="#d0d0d0" stroke-width="1.6"/>
<text x="864.70" y="547.30" font-size="14" fill="#a9a9a9" stroke="#a9a9a9" stroke-width="0.25" textLength="32.00" lengthAdjust="spacingAndGlyphs">Gain:</text>
<text x="908.50" y="539.40" font-size="10" fill="#b4b4b4" stroke="#b4b4b4" stroke-width="0.25" textLength="17.00" lengthAdjust="spacingAndGlyphs">-50</text>
<text x="945.80" y="539.40" font-size="10" fill="#b4b4b4" stroke="#b4b4b4" stroke-width="0.25" textLength="6.50" lengthAdjust="spacingAndGlyphs">0</text>
<text x="975.80" y="539.40" font-size="10" fill="#b4b4b4" stroke="#b4b4b4" stroke-width="0.25" textLength="12.50" lengthAdjust="spacingAndGlyphs">50</text>
<g shape-rendering="crispEdges">
<line x1="915.5" y1="549.5" x2="941" y2="549.5" stroke="#9a9a9a" stroke-width="1" />
<line x1="957" y1="549.5" x2="982" y2="549.5" stroke="#9a9a9a" stroke-width="1" />
<line x1="915.5" y1="543" x2="915.5" y2="550" stroke="#9a9a9a" stroke-width="1" />
<line x1="981.5" y1="543" x2="981.5" y2="550" stroke="#9a9a9a" stroke-width="1" />
<line x1="921.5" y1="546.5" x2="921.5" y2="550" stroke="#9a9a9a" stroke-width="1" />
<line x1="927.5" y1="546.5" x2="927.5" y2="550" stroke="#9a9a9a" stroke-width="1" />
<line x1="933.5" y1="546.5" x2="933.5" y2="550" stroke="#9a9a9a" stroke-width="1" />
<line x1="963.5" y1="546.5" x2="963.5" y2="550" stroke="#9a9a9a" stroke-width="1" />
<line x1="969.5" y1="546.5" x2="969.5" y2="550" stroke="#9a9a9a" stroke-width="1" />
<line x1="975.5" y1="546.5" x2="975.5" y2="550" stroke="#9a9a9a" stroke-width="1" />
</g>
<circle cx="949.4" cy="549.5" r="6.6" fill="#232323" stroke="#b0b0b0" stroke-width="2"/>
<text x="1017.80" y="549.50" font-size="12.5" fill="#4a9ff0" stroke="#4a9ff0" stroke-width="0.25" textLength="7.50" lengthAdjust="spacingAndGlyphs">0</text>
<text x="1028.00" y="549.50" font-size="12.5" fill="#c4c4c4" stroke="#c4c4c4" stroke-width="0.25" textLength="15.50" lengthAdjust="spacingAndGlyphs">dB</text>
<rect x="217.5" y="567.5" width="866" height="135" fill="#232323" stroke="#333333" stroke-width="1"/>
<text x="338.00" y="596.70" font-size="14" fill="#a9a9a9" stroke="#a9a9a9" stroke-width="0.25" textLength="40.00" lengthAdjust="spacingAndGlyphs">Cutoff:</text>
<text x="384.30" y="596.70" font-size="14" fill="#4a9ff0" stroke="#4a9ff0" stroke-width="0.25" textLength="32.50" lengthAdjust="spacingAndGlyphs">59.00</text>
<text x="420.80" y="596.70" font-size="14" fill="#a9a9a9" stroke="#a9a9a9" stroke-width="0.25" textLength="16.50" lengthAdjust="spacingAndGlyphs">Hz</text>
<text x="627.60" y="596.70" font-size="14" fill="#5e5e5e" stroke="#5e5e5e" stroke-width="0.25" textLength="71.50" lengthAdjust="spacingAndGlyphs">High Cutoff:</text>
<text x="705.80" y="596.70" font-size="14" fill="#5e5e5e" stroke="#5e5e5e" stroke-width="0.25" textLength="53.00" lengthAdjust="spacingAndGlyphs">61.00 Hz</text>
<circle cx="324.5" cy="636.4" r="7.6" fill="#9a9a9a"/>
<text x="336.30" y="641.70" font-size="14" fill="#a9a9a9" stroke="#a9a9a9" stroke-width="0.25" textLength="38.80" lengthAdjust="spacingAndGlyphs">Order:</text>
<text x="383.80" y="641.70" font-size="14" fill="#4a9ff0" stroke="#4a9ff0" stroke-width="0.25" textLength="8.00" lengthAdjust="spacingAndGlyphs">3</text>
<circle cx="551.2" cy="636.4" r="7.2" fill="none" stroke="#4e4e4e" stroke-width="2"/>
<text x="563.50" y="641.70" font-size="14" fill="#5e5e5e" stroke="#5e5e5e" stroke-width="0.25" textLength="133.00" lengthAdjust="spacingAndGlyphs">Transition Bandwidth:</text>
<text x="705.80" y="641.70" font-size="14" fill="#5e5e5e" stroke="#5e5e5e" stroke-width="0.25" textLength="45.50" lengthAdjust="spacingAndGlyphs">7.37 Hz</text>
<text x="894.80" y="641.70" font-size="14" fill="#5e5e5e" stroke="#5e5e5e" stroke-width="0.25" textLength="70.50" lengthAdjust="spacingAndGlyphs">High width:</text>
<text x="971.70" y="641.70" font-size="14" fill="#5e5e5e" stroke="#5e5e5e" stroke-width="0.25" textLength="45.50" lengthAdjust="spacingAndGlyphs">7.62 Hz</text>
<text x="317.70" y="683.70" font-size="14" fill="#5e5e5e" stroke="#5e5e5e" stroke-width="0.25" textLength="60.00" lengthAdjust="spacingAndGlyphs">Stop Attn:</text>
<text x="384.30" y="683.70" font-size="14" fill="#5e5e5e" stroke="#5e5e5e" stroke-width="0.25" textLength="35.00" lengthAdjust="spacingAndGlyphs">10 dB</text>
<text x="631.00" y="683.70" font-size="14" fill="#5e5e5e" stroke="#5e5e5e" stroke-width="0.25" textLength="68.50" lengthAdjust="spacingAndGlyphs">Pass ripple:</text>
<text x="705.80" y="683.70" font-size="14" fill="#5e5e5e" stroke="#5e5e5e" stroke-width="0.25" textLength="45.00" lengthAdjust="spacingAndGlyphs">0.00 dB</text>
<text x="883.40" y="683.70" font-size="14" fill="#5e5e5e" stroke="#5e5e5e" stroke-width="0.25" textLength="150.50" lengthAdjust="spacingAndGlyphs">Actual ripple: 0.00000dB</text>
<line x1="216" y1="718.5" x2="1084" y2="718.5" stroke="#2f2f2f" stroke-width="1" />
<text x="218.20" y="747.00" font-size="14" fill="#a9a9a9" stroke="#a9a9a9" stroke-width="0.25" textLength="106.50" lengthAdjust="spacingAndGlyphs">In: L, R | Out: L, R</text>
<rect x="217" y="760" width="22.7" height="23.2" fill="#3aa56e" rx="2"/>
<path d="M225.2,766.8 A6.2,6.2 0 1 0 231.8,766.8" fill="none" stroke="#a6e3bd" stroke-width="1.2"/>
<line x1="228.5" y1="764" x2="228.5" y2="771.5" stroke="#a6e3bd" stroke-width="1.2" />
<rect x="252" y="760.2" width="33" height="22.6" fill="#1c1c1c" stroke="#3585e0" stroke-width="1.6" rx="1.5"/>
<path d="M262,765.2 L273.7,771.2 L262,777.2 Z" fill="#9c9c9c"/>
<rect x="302" y="769.5" width="14.5" height="7" fill="#141414" />
<path d="M301.6,768.3 V776.5 H316.7 V770.8" fill="none" stroke="#9c9c9c" stroke-width="2.4"/>
<path d="M300.4,768.3 H307.5" fill="none" stroke="#9c9c9c" stroke-width="2.4"/>
<path d="M306.8,763.9 L315.3,768.1 L306.8,772.1 Z" fill="#9c9c9c"/>
<rect x="874" y="758.8" width="98" height="23.6" rx="11.8" fill="#1f1f1f" stroke="#9a9a9a" stroke-width="1.9"/>
<text x="906.80" y="774.80" font-size="14" fill="#c2c2c2" stroke="#c2c2c2" stroke-width="0.25" textLength="33.00" lengthAdjust="spacingAndGlyphs">Close</text>
<rect x="986.8" y="758.8" width="97.8" height="23.6" rx="11.8" fill="#1f1f1f" stroke="#9a9a9a" stroke-width="1.9"/>
<text x="1017.60" y="774.80" font-size="14" fill="#c2c2c2" stroke="#c2c2c2" stroke-width="0.25" textLength="35.50" lengthAdjust="spacingAndGlyphs">Apply</text>
</svg>
</body></html>
